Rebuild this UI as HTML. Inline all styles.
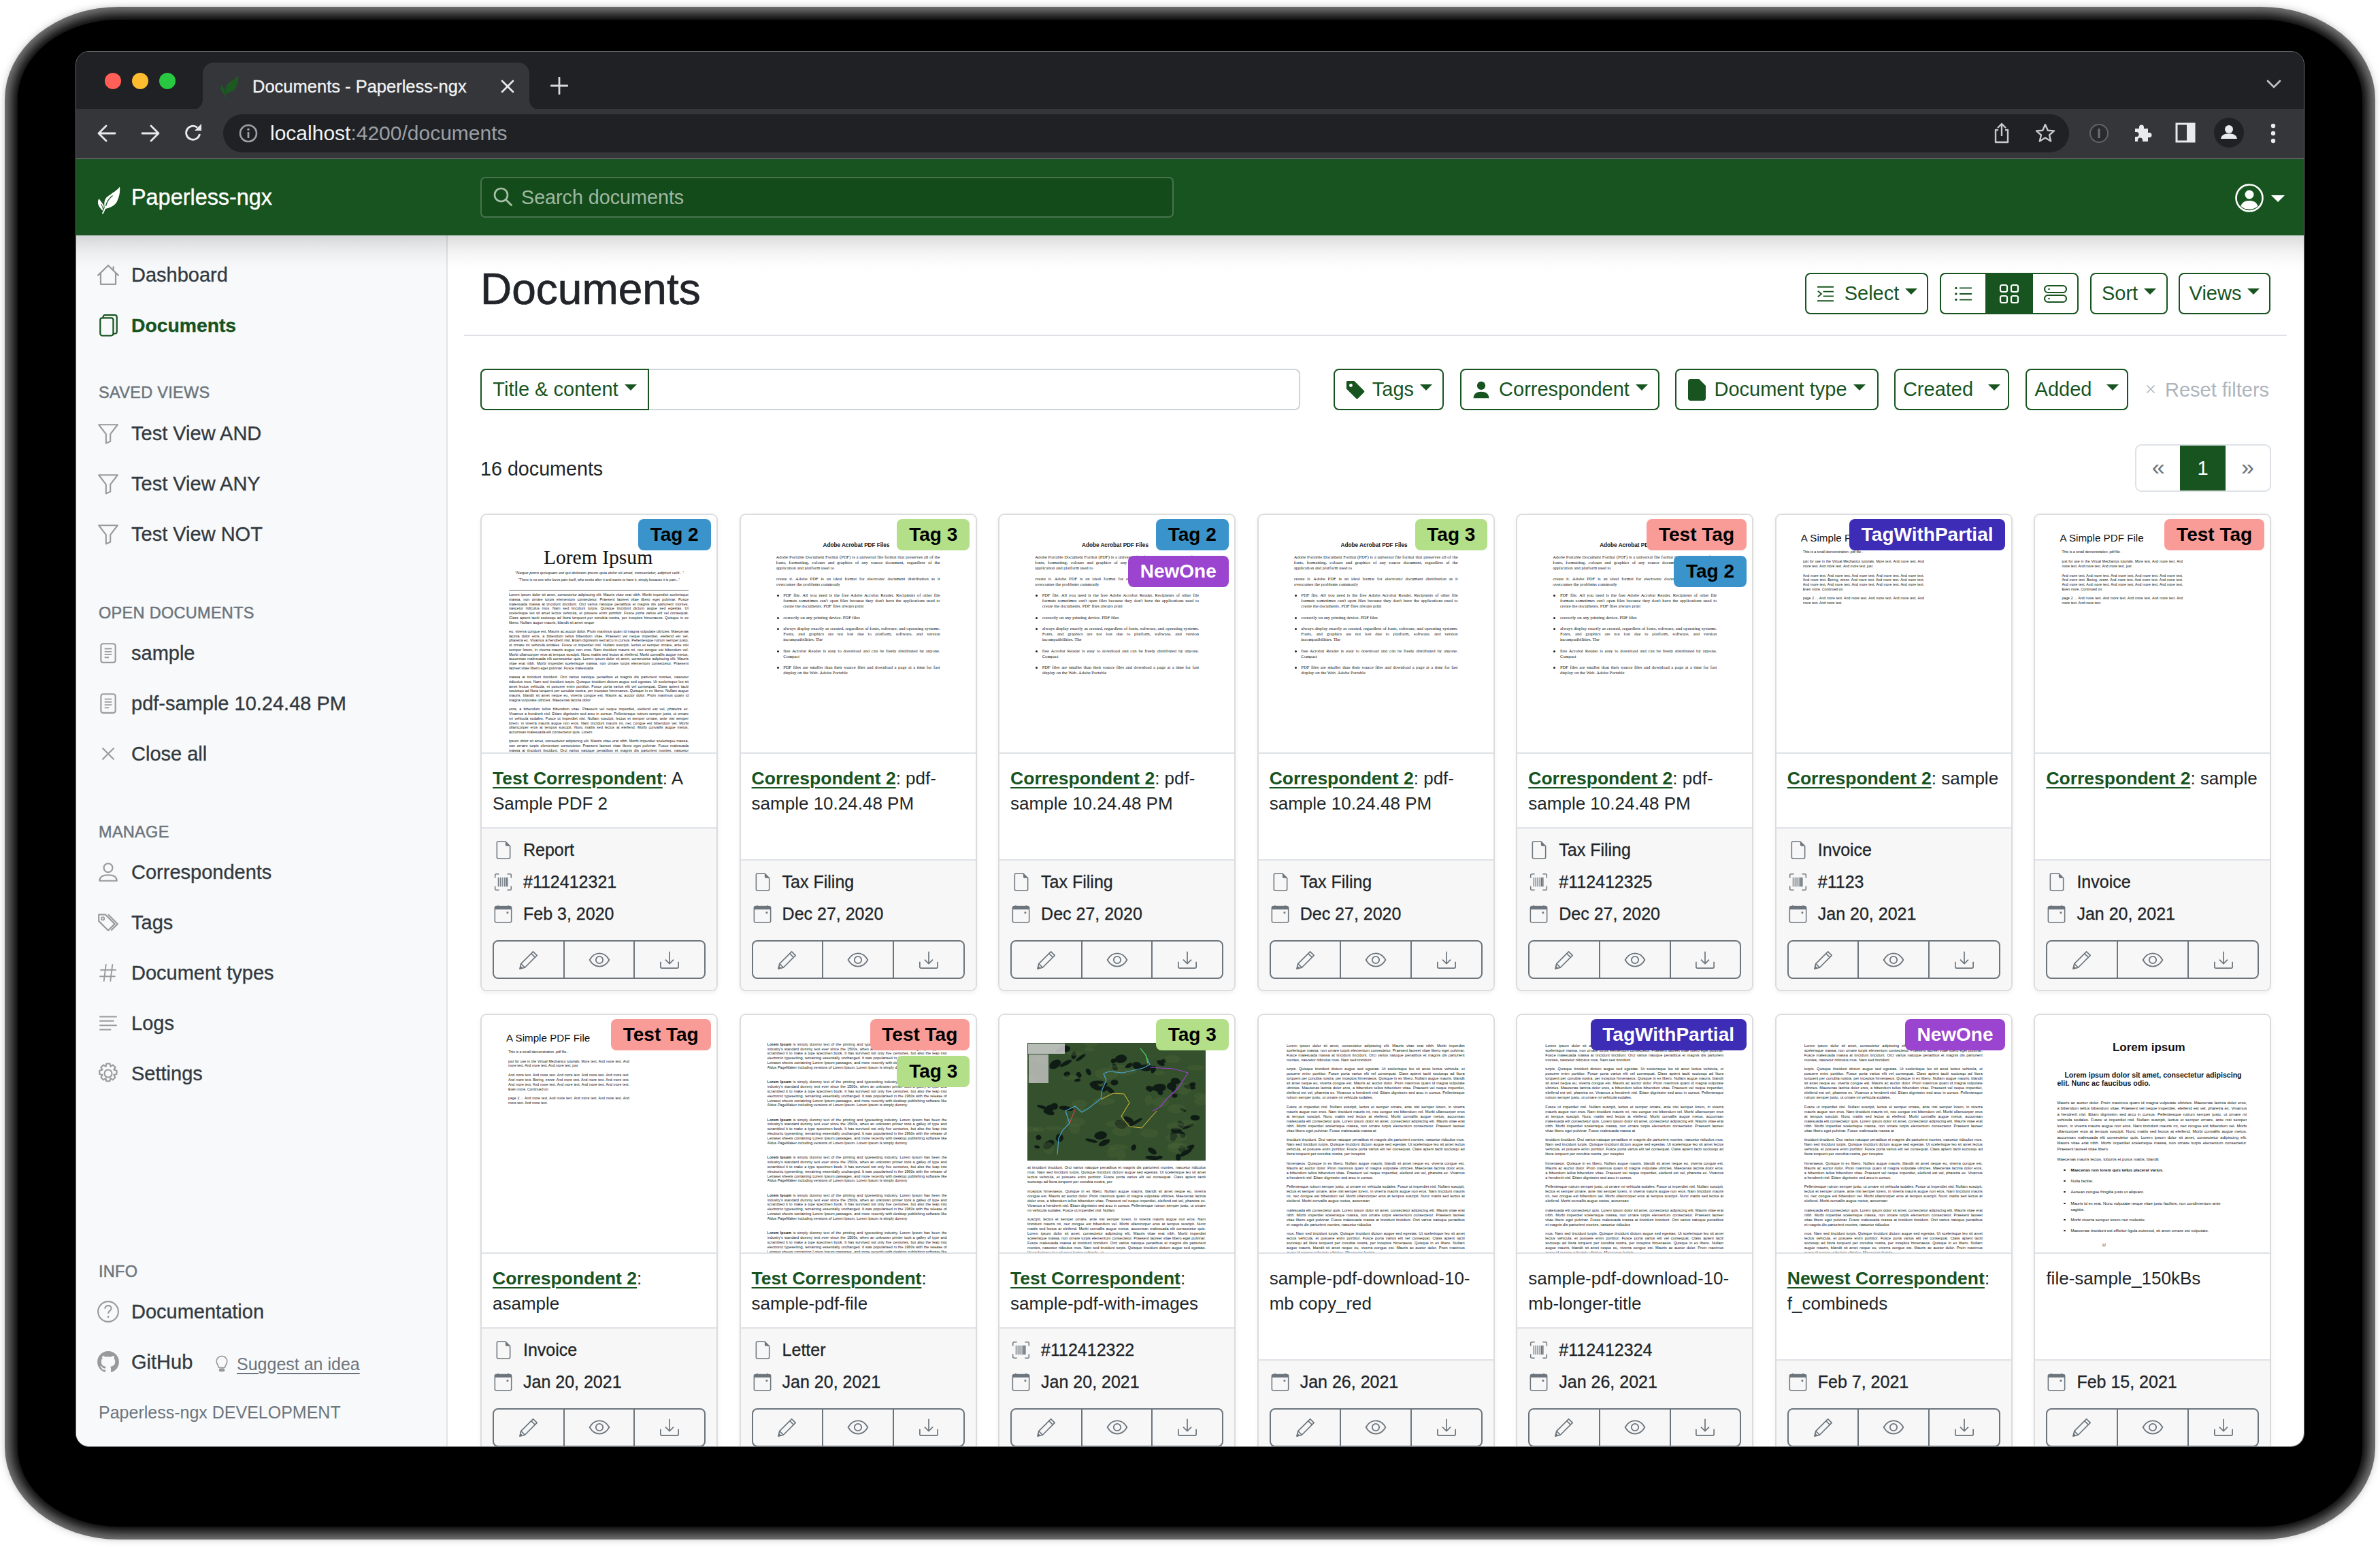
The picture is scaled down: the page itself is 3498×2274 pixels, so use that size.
<!DOCTYPE html><html><head><meta charset="utf-8"><title>Documents - Paperless-ngx</title><style>
*{box-sizing:border-box;margin:0;padding:0}
html,body{width:3498px;height:2274px;overflow:hidden;background:#fff;font-family:"Liberation Sans",sans-serif}
.abs{position:absolute}
#shadow-o{position:absolute;left:7px;top:10px;width:3484px;height:2253px;border-radius:168px/136px;background:#7c7c7c}
#shadow-i{position:absolute;left:26px;top:29px;width:3446px;height:2215px;border-radius:149px/117px;background:#000;box-shadow:0 0 18px 9px #000}
#win{position:absolute;left:111px;top:75px;width:3276px;height:2052px;border-radius:20px;overflow:hidden;background:#202124;border:1.5px solid #6f7073}
#tabstrip{position:absolute;left:0;top:0;width:100%;height:84px;background:#202124}
.tl{position:absolute;width:24px;height:24px;border-radius:50%;top:31px}
#tab{position:absolute;left:186px;top:16px;width:480px;height:70px;background:#35363a;border-radius:16px 16px 0 0}
#tab:before,#tab:after{content:"";position:absolute;bottom:0;width:16px;height:16px;background:transparent}
#tab:before{left:-16px;border-bottom-right-radius:16px;box-shadow:6px 6px 0 6px #35363a}
#tab:after{right:-16px;border-bottom-left-radius:16px;box-shadow:-6px 6px 0 6px #35363a}
#toolbar{position:absolute;left:0;top:84px;width:100%;height:72px;background:#35363a}
#tbline{position:absolute;left:0;top:156px;width:100%;height:2px;background:#5c5d60}
#omni{position:absolute;left:216px;top:92px;width:2713px;height:56px;border-radius:28px;background:#202124}
#page{position:absolute;left:0;top:158px;width:3274px;height:1892px;background:#fff;overflow:hidden}
#nav{position:absolute;left:0;top:0;width:100%;height:112px;background:#17541f;z-index:3}
#navshadow{position:absolute;left:0;top:112px;width:100%;height:54px;background:linear-gradient(rgba(0,0,0,.14),rgba(0,0,0,.1) 18%,rgba(0,0,0,.06) 38%,rgba(0,0,0,.03) 58%,rgba(0,0,0,.012) 78%,rgba(0,0,0,0));z-index:2}
#side{position:absolute;left:0;top:112px;width:546px;height:1780px;background:#f8f9fa;border-right:2px solid #e3e4e6}
.sl{position:absolute;left:81px;font-size:29px;color:#333a40;white-space:nowrap;line-height:36px;-webkit-text-stroke:0.35px currentColor}
.sh{position:absolute;left:33px;font-size:23.5px;color:#6c757d;white-space:nowrap;letter-spacing:.3px;line-height:30px;-webkit-text-stroke:0.5px currentColor}
.si{position:absolute;left:30px;width:34px;height:34px}
.btn{position:absolute;border:2px solid #17541f;border-radius:8px;color:#17541f;font-size:29px;white-space:nowrap;display:flex;align-items:center;justify-content:center}
.caret{display:inline-block;width:0;height:0;border-left:9px solid transparent;border-right:9px solid transparent;border-top:9px solid currentColor;margin-left:9px;position:relative;top:-3px}
.card{position:absolute;width:349px;border:2px solid #dcdcdc;border-radius:9px;background:#fff;box-shadow:0 3px 6px rgba(0,0,0,.06);overflow:hidden}
.thumb{position:absolute;left:0;top:0;width:100%;height:351px;overflow:hidden;background:#fff;border-bottom:2px solid #dee2e6}
.ctitle{position:absolute;left:16px;top:353px;width:313px;font-size:26px;line-height:37px;color:#212529;padding-top:16px}
.ctitle b{color:#17541f;text-decoration:underline;text-decoration-thickness:2px;text-underline-offset:4px;font-size:26.5px}
.foot{position:absolute;left:0;bottom:0;width:100%;background:#f7f7f7;border-top:2px solid #dee2e6}
.frow{position:relative;height:47px;font-size:25px;color:#212529;white-space:nowrap;-webkit-text-stroke:0.3px #212529}
.frow span{position:absolute;left:61px;top:0px;line-height:30px}
.frow svg{position:absolute;left:18px;top:2px}
.bg3{position:absolute;left:16px;width:313px;height:57px;border:2px solid #6c757d;border-radius:8px;display:flex}
.bg3 div{flex:1;display:flex;align-items:center;justify-content:center}
.bg3 div+div{border-left:2px solid #6c757d}
.tag{position:absolute;height:46px;border-radius:8px;font-weight:bold;font-size:28px;line-height:46px;padding:0 17.8px;white-space:nowrap}
.doc{position:absolute;color:#222;white-space:normal;word-spacing:0;overflow:hidden}
.tin{position:absolute;left:-2px;top:-3px;width:100%;height:100%}
.tin .doc{color:#111 !important}
</style></head><body>
<div id="shadow-o"></div><div id="shadow-i"></div>
<div id="win">
<div id="tabstrip">
<div class="tl" style="left:42px;background:#ff5f57"></div>
<div class="tl" style="left:82px;background:#febc2e"></div>
<div class="tl" style="left:122px;background:#28c840"></div>
<div id="tab">
<div class="abs" style="left:20px;top:13px"><svg width="40" height="40" viewBox="0 0 50 50" style=""><path d="M18 40C16 30 18 24 24 20.5C30 16 36 13 40 7.5C41 15 39 24 35 31C31 36 26 38.5 18 40Z" fill="#1c5a22"/><path d="M14.5 42.5C10 38 7.5 33 8 30C8 28 8.5 26.5 9.5 25C12 29 15 32 16.5 35C17 38 15.5 40.5 14.5 42.5Z" fill="#1c5a22"/><path d="M18.5 39L15 46.5" stroke="#1c5a22" stroke-width="2" stroke-linecap="round"/></svg></div>
<div class="abs" style="left:73px;top:20px;font-size:25.5px;color:#f1f3f4;white-space:nowrap;line-height:30px;-webkit-text-stroke:0.3px #f1f3f4">Documents - Paperless-ngx</div>
<div class="abs" style="left:438px;top:24.5px"><svg width="20" height="20" viewBox="0 0 20 20" style=""><path d="M2 2L18 18M18 2L2 18" stroke="#e8eaed" stroke-width="2.6" stroke-linecap="round"/></svg></div>
</div>
<div class="abs" style="left:697px;top:37px"><svg width="26" height="26" viewBox="0 0 26 26" style=""><path d="M13 1V25M1 13H25" stroke="#d7d9dc" stroke-width="2.8" stroke-linecap="round"/></svg></div>
<div class="abs" style="left:3219px;top:41px"><svg width="22" height="14" viewBox="0 0 22 14" style=""><path d="M2 2L11 11L20 2" stroke="#c4c7c5" stroke-width="2.6" fill="none" stroke-linecap="round"/></svg></div>
</div>
<div id="toolbar">
<div class="abs" style="left:29px;top:98px"></div>
<div class="abs" style="left:30px;top:23px"><svg width="30" height="26" viewBox="0 0 30 26" style=""><path d="M14 2L3 13L14 24M3 13H27" stroke="#e8eaed" stroke-width="2.8" fill="none" stroke-linecap="round" stroke-linejoin="round"/></svg></div>
<div class="abs" style="left:94px;top:23px"><svg width="30" height="26" viewBox="0 0 30 26" style="transform:scaleX(-1)"><path d="M14 2L3 13L14 24M3 13H27" stroke="#e8eaed" stroke-width="2.8" fill="none" stroke-linecap="round" stroke-linejoin="round"/></svg></div>
<div class="abs" style="left:157px;top:20px"><svg width="30" height="30" viewBox="0 0 30 30" style=""><path d="M24.5 17A10 10 0 1 1 21 7.5" stroke="#e8eaed" stroke-width="2.8" fill="none"/><path d="M27 2V12H17Z" fill="#e8eaed"/></svg></div>
</div>
<div id="tbline"></div>
<div id="omni">
<div class="abs" style="left:23px;top:14px"><svg width="28" height="28" viewBox="0 0 28 28" style=""><circle cx="14" cy="14" r="12" stroke="#9aa0a6" stroke-width="2.6" fill="none"/><rect x="12.6" y="12" width="2.8" height="9" fill="#9aa0a6"/><circle cx="14" cy="8.2" r="1.8" fill="#9aa0a6"/></svg></div>
<div class="abs" style="left:69px;top:10px;font-size:30px;line-height:36px;color:#f1f3f4;white-space:nowrap">localhost<span style="color:#9aa0a6">:4200/documents</span></div>
<div class="abs" style="left:2600px;top:12px"><svg width="28" height="32" viewBox="0 0 28 32" style=""><path d="M9 11H5V29H23V11H19M14 2V20M8 8L14 2L20 8" stroke="#c7c9cc" stroke-width="2.4" fill="none" stroke-linejoin="round"/></svg></div>
<div class="abs" style="left:2662px;top:12px"><svg width="32" height="32" viewBox="0 0 32 32" style=""><path d="M16 3L19.8 11.7L29 12.4L22 18.5L24.2 27.6L16 22.6L7.8 27.6L10 18.5L3 12.4L12.2 11.7Z" stroke="#c7c9cc" stroke-width="2.4" fill="none" stroke-linejoin="round"/></svg></div>
</div>
<div class="abs" style="left:2958px;top:105px"><svg width="30" height="30" viewBox="0 0 30 30" style=""><circle cx="15" cy="15" r="13" stroke="#5f6368" stroke-width="2" fill="#2a2b2e"/><rect x="13.5" y="8" width="3" height="14" fill="#6e7276"/></svg></div>
<div class="abs" style="left:3021px;top:104px"><svg width="32" height="32" viewBox="0 0 32 32" style=""><path d="M5 9H11V7A3.5 3.5 0 0 1 18 7V9H24V15H26A3.5 3.5 0 0 1 26 22H24V28H16V26A3.5 3.5 0 0 0 9 26V28H5V21H7A3.5 3.5 0 0 0 7 14H5Z" fill="#e8eaed"/></svg></div>
<div class="abs" style="left:3085px;top:104px"><svg width="30" height="30" viewBox="0 0 30 30" style=""><rect x="2" y="2" width="26" height="26" fill="none" stroke="#e8eaed" stroke-width="3"/><rect x="17" y="2" width="11" height="26" fill="#e8eaed"/></svg></div>
<div class="abs" style="left:3142px;top:97px;width:44px;height:44px;border-radius:50%;background:#202124"><svg width="44" height="44" viewBox="0 0 44 44" style=""><circle cx="22" cy="17" r="6" fill="#e8eaed"/><path d="M10 31C11 25 16 23.5 22 23.5S33 25 34 31Z" fill="#e8eaed"/></svg></div>
<div class="abs" style="left:3225px;top:104px"><svg width="8" height="32" viewBox="0 0 8 32" style=""><circle cx="4" cy="5" r="3.2" fill="#e8eaed"/><circle cx="4" cy="16" r="3.2" fill="#e8eaed"/><circle cx="4" cy="27" r="3.2" fill="#e8eaed"/></svg></div>
<div id="page">
<div id="nav">
<div class="abs" style="left:24px;top:33px"><svg width="50" height="50" viewBox="0 0 50 50" style=""><path d="M18 40C16 30 18 24 24 20.5C30 16 36 13 40 7.5C41 15 39 24 35 31C31 36 26 38.5 18 40Z" fill="#fff"/><path d="M29.5 20.5C24 25 20.5 30 19.5 36" stroke="#17541f" stroke-width="1.3" fill="none"/><path d="M14.5 42.5C10 38 7.5 33 8 30C8 28 8.5 26.5 9.5 25C12 29 15 32 16.5 35C17 38 15.5 40.5 14.5 42.5Z" fill="#fff"/><path d="M13 33L15.5 40" stroke="#17541f" stroke-width="0.9" fill="none"/><path d="M18.5 39L15 46.5" stroke="#fff" stroke-width="1.8" fill="none" stroke-linecap="round"/></svg></div>
<div class="abs" style="left:81px;top:36px;font-size:32.4px;line-height:40px;color:#fff;white-space:nowrap;-webkit-text-stroke:0.4px #fff">Paperless-ngx</div>
<div class="abs" style="left:594px;top:26px;width:1019px;height:60px;border:2px solid rgba(255,255,255,.22);border-radius:7px;background:rgba(0,0,0,.1)"></div>
<div class="abs" style="left:613px;top:41px"><svg width="28" height="29" viewBox="0 0 28 29" style=""><circle cx="11.5" cy="11.5" r="9.5" stroke="#a9c0ab" stroke-width="2.6" fill="none"/><path d="M18.5 18.5L26.5 26.5" stroke="#a9c0ab" stroke-width="2.8" stroke-linecap="round"/></svg></div>
<div class="abs" style="left:654px;top:38px;font-size:28.7px;line-height:36px;color:#9fb8a2;white-space:nowrap">Search documents</div>
<div class="abs" style="left:3173px;top:36px"><svg width="42" height="42" viewBox="0 0 42 42" style=""><circle cx="21" cy="21" r="19.5" stroke="#fff" stroke-width="2.6" fill="none"/><circle cx="21" cy="16" r="6.5" fill="#fff"/><path d="M8.5 33C10.5 27 15 25 21 25S31.5 27 33.5 33A19 19 0 0 1 8.5 33Z" fill="#fff"/></svg></div>
<div class="abs" style="left:3226px;top:53px;width:0;height:0;border-left:10px solid transparent;border-right:10px solid transparent;border-top:10px solid #fff"></div>
</div>
<div id="navshadow"></div>
<div id="side">
<div class="si" style="top:41.0px"><svg width="34" height="34" viewBox="0 0 16 16" style=""><path d="M8 1.5L1 8.3M8 1.5L15 8.3M2.8 6.8V14.5H13.2V6.8M11.6 2.5V5" stroke="#9a9a9a" stroke-width="1.05" fill="none" stroke-linejoin="round" stroke-linecap="round"/></svg></div>
<div class="sl" style="top:40.0px;">Dashboard</div>
<div class="si" style="top:115.0px"><svg width="34" height="34" viewBox="0 0 16 16" style=""><rect x="2.5" y="3" width="9" height="12.2" rx="1.4" stroke="#17541f" stroke-width="1.05" fill="none"/><path d="M4.5 3V2.4C4.5 1.6 5 1 5.8 1H12.6C13.4 1 14 1.6 14 2.4V12.6C14 13.3 13.5 13.8 12.8 13.8H11.5" stroke="#17541f" stroke-width="1.05" fill="none"/></svg></div>
<div class="sl" style="top:114.0px;color:#17541f;font-weight:bold;font-size:28.3px">Documents</div>
<div class="si" style="top:274.0px"><svg width="34" height="34" viewBox="0 0 16 16" style=""><path d="M1.5 2H14.5L9.5 8.5V13.5L6.5 14.8V8.5Z" stroke="#9a9a9a" stroke-width="1" fill="none" stroke-linejoin="round"/></svg></div>
<div class="sl" style="top:273.0px;">Test View AND</div>
<div class="si" style="top:348.0px"><svg width="34" height="34" viewBox="0 0 16 16" style=""><path d="M1.5 2H14.5L9.5 8.5V13.5L6.5 14.8V8.5Z" stroke="#9a9a9a" stroke-width="1" fill="none" stroke-linejoin="round"/></svg></div>
<div class="sl" style="top:347.0px;">Test View ANY</div>
<div class="si" style="top:422.0px"><svg width="34" height="34" viewBox="0 0 16 16" style=""><path d="M1.5 2H14.5L9.5 8.5V13.5L6.5 14.8V8.5Z" stroke="#9a9a9a" stroke-width="1" fill="none" stroke-linejoin="round"/></svg></div>
<div class="sl" style="top:421.0px;">Test View NOT</div>
<div class="si" style="top:597.0px"><svg width="34" height="34" viewBox="0 0 16 16" style=""><rect x="3" y="1.5" width="10" height="13" rx="1.5" stroke="#9a9a9a" stroke-width="1" fill="none"/><path d="M5.5 5H10.5M5.5 7H10.5M5.5 9H10.5M5.5 11H8.5" stroke="#9a9a9a" stroke-width="0.9"/></svg></div>
<div class="sl" style="top:596.0px;">sample</div>
<div class="si" style="top:671.0px"><svg width="34" height="34" viewBox="0 0 16 16" style=""><rect x="3" y="1.5" width="10" height="13" rx="1.5" stroke="#9a9a9a" stroke-width="1" fill="none"/><path d="M5.5 5H10.5M5.5 7H10.5M5.5 9H10.5M5.5 11H8.5" stroke="#9a9a9a" stroke-width="0.9"/></svg></div>
<div class="sl" style="top:670.0px;">pdf-sample 10.24.48 PM</div>
<div class="si" style="top:745.0px"><svg width="34" height="34" viewBox="0 0 16 16" style=""><path d="M4 4L12 12M12 4L4 12" stroke="#9a9a9a" stroke-width="1"/></svg></div>
<div class="sl" style="top:744.0px;">Close all</div>
<div class="si" style="top:919.0px"><svg width="34" height="34" viewBox="0 0 16 16" style=""><circle cx="8" cy="5" r="3" stroke="#9a9a9a" stroke-width="1" fill="none"/><path d="M2 14C2 11 4.5 10 8 10S14 11 14 14Z" stroke="#9a9a9a" stroke-width="1" fill="none" stroke-linejoin="round"/></svg></div>
<div class="sl" style="top:918.0px;">Correspondents</div>
<div class="si" style="top:993.0px"><svg width="34" height="34" viewBox="0 0 16 16" style=""><path d="M1.5 2.5V7L8 13.5L12.5 9L6 2.5Z" stroke="#9a9a9a" stroke-width="1" fill="none" stroke-linejoin="round"/><circle cx="4.3" cy="5.3" r="1" stroke="#9a9a9a" stroke-width="0.9" fill="none"/><path d="M8 2.5L14.5 9L10 13.5" stroke="#9a9a9a" stroke-width="1" fill="none"/></svg></div>
<div class="sl" style="top:992.0px;">Tags</div>
<div class="si" style="top:1067.0px"><svg width="34" height="34" viewBox="0 0 16 16" style=""><path d="M6.5 2L5 14M11 2L9.5 14M2.5 6H13.5M2 10.5H13" stroke="#9a9a9a" stroke-width="0.9"/></svg></div>
<div class="sl" style="top:1066.0px;">Document types</div>
<div class="si" style="top:1141.0px"><svg width="34" height="34" viewBox="0 0 16 16" style=""><path d="M2 3.5H14M2 6.5H12M2 9.5H14M2 12.5H10" stroke="#9a9a9a" stroke-width="0.9"/></svg></div>
<div class="sl" style="top:1140.0px;">Logs</div>
<div class="si" style="top:1215.0px"><svg width="34" height="34" viewBox="0 0 16 16" style=""><circle cx="8" cy="8" r="2.6" stroke="#9a9a9a" stroke-width="1" fill="none"/><path d="M6.8 1.2H9.2L9.6 3.1L11.3 2.1L13 3.8L11.9 5.4L13.9 6V8.4L11.9 9L12.9 10.7L11.2 12.4L9.6 11.3L9.1 13.3H6.7L6.3 11.3L4.7 12.4L3 10.7L4 9L2 8.4V6L4 5.4L3 3.8L4.7 2.1L6.4 3.1Z" stroke="#9a9a9a" stroke-width="1" fill="none" stroke-linejoin="round"/></svg></div>
<div class="sl" style="top:1214.0px;">Settings</div>
<div class="si" style="top:1565.0px"><svg width="34" height="34" viewBox="0 0 16 16" style=""><circle cx="8" cy="8" r="7" stroke="#9a9a9a" stroke-width="1" fill="none"/><path d="M5.8 6C5.8 4.6 6.8 3.8 8 3.8S10.2 4.6 10.2 5.8C10.2 7.3 8 7.4 8 9.3" stroke="#9a9a9a" stroke-width="1" fill="none"/><circle cx="8" cy="11.6" r=".7" fill="#9a9a9a"/></svg></div>
<div class="sl" style="top:1564.0px;">Documentation</div>
<div class="si" style="top:1639.0px"><svg width="34" height="34" viewBox="0 0 16 16" style=""><path d="M8 0.5C3.9 0.5 0.5 3.9 0.5 8C0.5 11.3 2.7 14.1 5.6 15.1C6 15.2 6.1 14.9 6.1 14.7V13.4C4 13.8 3.6 12.5 3.6 12.5C3.2 11.6 2.7 11.4 2.7 11.4C2 10.9 2.8 10.9 2.8 10.9C3.5 11 3.9 11.7 3.9 11.7C4.6 12.8 5.6 12.5 6.1 12.3C6.2 11.8 6.4 11.5 6.6 11.3C4.9 11.1 3.2 10.5 3.2 7.7C3.2 6.9 3.5 6.2 4 5.7C3.9 5.5 3.7 4.8 4.1 3.8C4.1 3.8 4.7 3.6 6.1 4.5C6.7 4.4 7.4 4.3 8 4.3S9.3 4.4 9.9 4.5C11.3 3.6 11.9 3.8 11.9 3.8C12.3 4.8 12.1 5.5 12 5.7C12.5 6.2 12.8 6.9 12.8 7.7C12.8 10.5 11.1 11.1 9.4 11.3C9.7 11.5 9.9 12 9.9 12.6V14.7C9.9 14.9 10 15.2 10.5 15.1C13.3 14.1 15.5 11.3 15.5 8C15.5 3.9 12.1 0.5 8 0.5Z" fill="#9a9a9a"/></svg></div>
<div class="sl" style="top:1638.0px;">GitHub</div>
<div class="sh" style="top:216.0px">SAVED VIEWS</div>
<div class="sh" style="top:540.0px">OPEN DOCUMENTS</div>
<div class="sh" style="top:862.0px">MANAGE</div>
<div class="sh" style="top:1508.0px">INFO</div>
<div class="abs" style="left:202px;top:1645px"><svg width="24" height="28" viewBox="0 0 16 18" style=""><path d="M5 12.5C5 10.5 2.8 9.5 2.8 6.4A5.2 5.2 0 0 1 13.2 6.4C13.2 9.5 11 10.5 11 12.5Z" stroke="#9a9a9a" stroke-width="1.1" fill="none"/><rect x="5.2" y="13.2" width="5.6" height="3.3" rx="1.2" fill="#9a9a9a"/></svg></div>
<div class="abs" style="left:236px;top:1643px;font-size:25px;line-height:32px;color:#6c757d;text-decoration:underline;text-underline-offset:4px;white-space:nowrap">Suggest an idea</div>
<div class="abs" style="left:33px;top:1715px;font-size:25px;line-height:30px;color:#6c757d;white-space:nowrap">Paperless-ngx DEVELOPMENT</div>
</div>
<div class="abs" style="left:594px;top:155px;font-size:64px;line-height:72px;color:#212529;white-space:nowrap;-webkit-text-stroke:0.7px #212529">Documents</div>
<div class="abs" style="left:570px;top:258px;width:2679px;height:2px;background:#dee2e6"></div>
<div class="btn" style="left:2541px;top:167px;width:181px;height:61px;"><svg width="28" height="24" viewBox="0 0 16 14" style=""><path d="M1 1H15M6 5H15M6 9H15M1 13H15M1.5 4.5L4.5 7L1.5 9.5" stroke="#17541f" stroke-width="1.1" fill="none"/></svg><span style="margin-left:14px">Select</span><span class="caret"></span></div>
<div class="btn" style="left:2739px;top:167px;width:204px;height:61px;justify-content:flex-start;overflow:hidden"><div style="width:65px;height:57px;display:flex;align-items:center;justify-content:center"><svg width="32" height="24" viewBox="0 0 16 14" style=""><circle cx="1.5" cy="2" r="1" fill="#17541f"/><circle cx="1.5" cy="7" r="1" fill="#17541f"/><circle cx="1.5" cy="12" r="1" fill="#17541f"/><path d="M4.5 2H15M4.5 7H15M4.5 12H15" stroke="#17541f" stroke-width="1.1"/></svg></div><div style="width:70px;height:57px;background:#17541f;display:flex;align-items:center;justify-content:center"><svg width="32" height="32" viewBox="0 0 16 16" style=""><rect x="1.5" y="1.5" width="5" height="5" rx="1.2" stroke="#fff" stroke-width="1.1" fill="none"/><rect x="9.5" y="1.5" width="5" height="5" rx="1.2" stroke="#fff" stroke-width="1.1" fill="none"/><rect x="1.5" y="9.5" width="5" height="5" rx="1.2" stroke="#fff" stroke-width="1.1" fill="none"/><rect x="9.5" y="9.5" width="5" height="5" rx="1.2" stroke="#fff" stroke-width="1.1" fill="none"/></svg></div><div style="width:65px;height:57px;display:flex;align-items:center;justify-content:center"><svg width="36" height="28" viewBox="0 0 18 14" style=""><rect x="1" y="1" width="16" height="5" rx="2.5" stroke="#17541f" stroke-width="1.1" fill="none"/><rect x="1" y="8" width="16" height="5" rx="2.5" stroke="#17541f" stroke-width="1.1" fill="none"/><path d="M3.5 3.5H5M3.5 10.5H5" stroke="#17541f" stroke-width="0.8"/></svg></div></div>
<div class="btn" style="left:2960px;top:167px;width:114px;height:61px;"><span>Sort</span><span class="caret"></span></div>
<div class="btn" style="left:3090px;top:167px;width:135px;height:61px;"><span>Views</span><span class="caret"></span></div>
<div class="abs" style="left:594px;top:308px;width:1205px;height:61px;border:2px solid #ced4da;border-radius:8px"></div>
<div class="btn" style="left:594px;top:308px;width:248px;height:61px;border-radius:8px 0 0 8px"><span>Title &amp; content</span><span class="caret"></span></div>
<div class="btn" style="left:1848px;top:308px;width:162px;height:61px;"><svg width="30" height="30" viewBox="0 0 16 16" style=""><path d="M1 1.8V7.2L8.6 14.8C9 15.2 9.6 15.2 10 14.8L14.8 10C15.2 9.6 15.2 9 14.8 8.6L7.2 1H1.8C1.4 1 1 1.4 1 1.8ZM4.5 3.2A1.3 1.3 0 1 0 4.5 5.8A1.3 1.3 0 1 0 4.5 3.2Z" fill="#17541f" fill-rule="evenodd"/></svg><span style="margin-left:10px">Tags</span><span class="caret"></span></div>
<div class="btn" style="left:2034px;top:308px;width:293px;height:61px;"><svg width="28" height="28" viewBox="0 0 16 16" style=""><circle cx="8" cy="4.5" r="3.5" fill="#17541f"/><path d="M1.5 15C1.5 11 4.5 9.5 8 9.5S14.5 11 14.5 15Z" fill="#17541f"/></svg><span style="margin-left:12px">Correspondent</span><span class="caret"></span></div>
<div class="btn" style="left:2350px;top:308px;width:299px;height:61px;"><svg width="26" height="32" viewBox="0 0 13 16" style=""><path d="M1.8 0H8L13 5V14.2C13 15.2 12.2 16 11.2 16H1.8C0.8 16 0 15.2 0 14.2V1.8C0 0.8 0.8 0 1.8 0Z" fill="#17541f"/><path d="M8 0V3.5C8 4.3 8.7 5 9.5 5H13" fill="#fff" opacity=".0"/></svg><span style="margin-left:12px">Document type</span><span class="caret"></span></div>
<div class="btn" style="left:2672px;top:308px;width:169px;height:61px;"><span>Created</span><span class="caret" style="margin-left:22px"></span></div>
<div class="btn" style="left:2865px;top:308px;width:151px;height:61px;"><span>Added</span><span class="caret" style="margin-left:22px"></span></div>
<div class="abs" style="left:3038px;top:327px"><svg width="22" height="22" viewBox="0 0 16 16" style=""><path d="M4 4L12 12M12 4L4 12" stroke="#adb5bd" stroke-width="1.2"/></svg></div>
<div class="abs" style="left:3070px;top:321px;font-size:29px;line-height:36px;color:#adb5bd;white-space:nowrap">Reset filters</div>
<div class="abs" style="left:594px;top:437px;font-size:28.7px;line-height:36px;color:#212529;white-space:nowrap">16 documents</div>
<div class="abs" style="left:3026px;top:419px;width:200px;height:70px;border:2px solid #dee2e6;border-radius:9px;overflow:hidden;display:flex"><div style="width:65px;display:flex;align-items:center;justify-content:center;color:#6c757d;font-size:34px;padding-bottom:4px">&laquo;</div><div style="width:67px;margin:-2px 0;background:#17541f;display:flex;align-items:center;justify-content:center;color:#fff;font-size:29px">1</div><div style="width:66px;display:flex;align-items:center;justify-content:center;color:#6c757d;font-size:34px;padding-bottom:4px">&raquo;</div></div>
<div class="card" style="left:594.0px;top:521.0px;height:702px">
<div class="thumb"><div class="tin"><div class="doc" style="left:92.9px;top:48.2px;font: normal 29.6px/35.5px 'Liberation Serif';color:#111;white-space:nowrap">Lorem Ipsum</div>
<div class="doc" style="left:51px;top:84px;font:italic 5.95px/8px 'Liberation Sans';color:#333;white-space:nowrap">"Neque porro quisquam est qui dolorem ipsum quia dolor sit amet, consectetur, adipisci velit..."</div>
<div class="doc" style="left:56px;top:94px;font:5.1px/8px 'Liberation Sans';color:#444;white-space:nowrap">"There is no one who loves pain itself, who seeks after it and wants to have it, simply because it is pain..."</div>
<div class="doc" style="left:42px;top:112.5px;width:264px;height:1px;background:#666"></div>
<div class="doc" style="left:42.0px;top:117.0px;width:264.0px;height:7.8px;font:normal normal 5.5px/6.76px 'Liberation Sans';color:#333;white-space:nowrap;text-align:justify;text-align-last:justify;">Lorem ipsum dolor sit amet, consectetur adipiscing elit. Mauris vitae erat nibh. Morbi imperdiet scelerisque</div>
<div class="doc" style="left:42.0px;top:123.8px;width:264.0px;height:7.8px;font:normal normal 5.5px/6.76px 'Liberation Sans';color:#333;white-space:nowrap;text-align:justify;text-align-last:justify;">massa, non ornare turpis elementum consectetur. Praesent laoreet vitae libero eget pulvinar. Fusce</div>
<div class="doc" style="left:42.0px;top:130.5px;width:264.0px;height:7.8px;font:normal normal 5.5px/6.76px 'Liberation Sans';color:#333;white-space:nowrap;text-align:justify;text-align-last:justify;">malesuada massa at tincidunt tincidunt. Orci varius natoque penatibus et magnis dis parturient montes,</div>
<div class="doc" style="left:42.0px;top:137.3px;width:264.0px;height:7.8px;font:normal normal 5.5px/6.76px 'Liberation Sans';color:#333;white-space:nowrap;text-align:justify;text-align-last:justify;">nascetur ridiculus mus. Nam sed tincidunt turpis. Quisque tincidunt dictum augue sed egestas. Ut</div>
<div class="doc" style="left:42.0px;top:144.0px;width:264.0px;height:7.8px;font:normal normal 5.5px/6.76px 'Liberation Sans';color:#333;white-space:nowrap;text-align:justify;text-align-last:justify;">scelerisque leo sit amet lectus vehicula, et posuere enim porttitor. Fusce porta varius elit vel consequat.</div>
<div class="doc" style="left:42.0px;top:150.8px;width:264.0px;height:7.8px;font:normal normal 5.5px/6.76px 'Liberation Sans';color:#333;white-space:nowrap;text-align:justify;text-align-last:justify;">Class aptent taciti sociosqu ad litora torquent per conubia nostra, per inceptos himenaeos. Quisque in ex</div>
<div class="doc" style="left:42.0px;top:157.6px;width:165.2px;height:7.8px;font:normal normal 5.5px/6.76px 'Liberation Sans';color:#333;white-space:nowrap;">libero. Nullam augue mauris, blandit sit amet neque</div>
<div class="doc" style="left:42.0px;top:170.8px;width:264.0px;height:7.8px;font:normal normal 5.5px/6.76px 'Liberation Sans';color:#333;white-space:nowrap;text-align:justify;text-align-last:justify;">eu, viverra congue est. Mauris ac auctor dolor. Proin maximus quam id magna vulputate ultricies. Maecenas</div>
<div class="doc" style="left:42.0px;top:177.6px;width:264.0px;height:7.8px;font:normal normal 5.5px/6.76px 'Liberation Sans';color:#333;white-space:nowrap;text-align:justify;text-align-last:justify;">lacinia dolor eros, a bibendum tellus bibendum vitae. Praesent vel neque imperdiet, eleifend est vel,</div>
<div class="doc" style="left:42.0px;top:184.3px;width:264.0px;height:7.8px;font:normal normal 5.5px/6.76px 'Liberation Sans';color:#333;white-space:nowrap;text-align:justify;text-align-last:justify;">pharetra ex. Vivamus a hendrerit nisl. Etiam dignissim sed arcu in cursus. Pellentesque rutrum semper justo,</div>
<div class="doc" style="left:42.0px;top:191.1px;width:264.0px;height:7.8px;font:normal normal 5.5px/6.76px 'Liberation Sans';color:#333;white-space:nowrap;text-align:justify;text-align-last:justify;">ut ornare mi vehicula sodales. Fusce ut imperdiet nisl. Nullam suscipit, lectus et semper ornare, ante nisi</div>
<div class="doc" style="left:42.0px;top:197.9px;width:264.0px;height:7.8px;font:normal normal 5.5px/6.76px 'Liberation Sans';color:#333;white-space:nowrap;text-align:justify;text-align-last:justify;">semper lorem, in viverra mauris augue non eros. Nam tincidunt mauris mi, nec congue est bibendum vel.</div>
<div class="doc" style="left:42.0px;top:204.6px;width:264.0px;height:7.8px;font:normal normal 5.5px/6.76px 'Liberation Sans';color:#333;white-space:nowrap;text-align:justify;text-align-last:justify;">Morbi ullamcorper eros at tempus suscipit. Nunc mattis sed lectus at eleifend. Morbi convallis augue metus,</div>
<div class="doc" style="left:42.0px;top:211.4px;width:264.0px;height:7.8px;font:normal normal 5.5px/6.76px 'Liberation Sans';color:#333;white-space:nowrap;text-align:justify;text-align-last:justify;">accumsan malesuada elit consectetur quis. Lorem ipsum dolor sit amet, consectetur adipiscing elit. Mauris</div>
<div class="doc" style="left:42.0px;top:218.1px;width:264.0px;height:7.8px;font:normal normal 5.5px/6.76px 'Liberation Sans';color:#333;white-space:nowrap;text-align:justify;text-align-last:justify;">vitae erat nibh. Morbi imperdiet scelerisque massa, non ornare turpis elementum consectetur. Praesent</div>
<div class="doc" style="left:42.0px;top:224.9px;width:165.2px;height:7.8px;font:normal normal 5.5px/6.76px 'Liberation Sans';color:#333;white-space:nowrap;">laoreet vitae libero eget pulvinar. Fusce malesuada</div>
<div class="doc" style="left:42.0px;top:238.2px;width:264.0px;height:7.8px;font:normal normal 5.5px/6.76px 'Liberation Sans';color:#333;white-space:nowrap;text-align:justify;text-align-last:justify;">massa at tincidunt tincidunt. Orci varius natoque penatibus et magnis dis parturient montes, nascetur</div>
<div class="doc" style="left:42.0px;top:244.9px;width:264.0px;height:7.8px;font:normal normal 5.5px/6.76px 'Liberation Sans';color:#333;white-space:nowrap;text-align:justify;text-align-last:justify;">ridiculus mus. Nam sed tincidunt turpis. Quisque tincidunt dictum augue sed egestas. Ut scelerisque leo sit</div>
<div class="doc" style="left:42.0px;top:251.7px;width:264.0px;height:7.8px;font:normal normal 5.5px/6.76px 'Liberation Sans';color:#333;white-space:nowrap;text-align:justify;text-align-last:justify;">amet lectus vehicula, et posuere enim porttitor. Fusce porta varius elit vel consequat. Class aptent taciti</div>
<div class="doc" style="left:42.0px;top:258.4px;width:264.0px;height:7.8px;font:normal normal 5.5px/6.76px 'Liberation Sans';color:#333;white-space:nowrap;text-align:justify;text-align-last:justify;">sociosqu ad litora torquent per conubia nostra, per inceptos himenaeos. Quisque in ex libero. Nullam augue</div>
<div class="doc" style="left:42.0px;top:265.2px;width:264.0px;height:7.8px;font:normal normal 5.5px/6.76px 'Liberation Sans';color:#333;white-space:nowrap;text-align:justify;text-align-last:justify;">mauris, blandit sit amet neque eu, viverra congue est. Mauris ac auctor dolor. Proin maximus quam id</div>
<div class="doc" style="left:42.0px;top:272.0px;width:165.2px;height:7.8px;font:normal normal 5.5px/6.76px 'Liberation Sans';color:#333;white-space:nowrap;">magna vulputate ultricies. Maecenas lacinia dolor</div>
<div class="doc" style="left:42.0px;top:285.2px;width:264.0px;height:7.8px;font:normal normal 5.5px/6.76px 'Liberation Sans';color:#333;white-space:nowrap;text-align:justify;text-align-last:justify;">eros, a bibendum tellus bibendum vitae. Praesent vel neque imperdiet, eleifend est vel, pharetra ex.</div>
<div class="doc" style="left:42.0px;top:292.0px;width:264.0px;height:7.8px;font:normal normal 5.5px/6.76px 'Liberation Sans';color:#333;white-space:nowrap;text-align:justify;text-align-last:justify;">Vivamus a hendrerit nisl. Etiam dignissim sed arcu in cursus. Pellentesque rutrum semper justo, ut ornare</div>
<div class="doc" style="left:42.0px;top:298.7px;width:264.0px;height:7.8px;font:normal normal 5.5px/6.76px 'Liberation Sans';color:#333;white-space:nowrap;text-align:justify;text-align-last:justify;">mi vehicula sodales. Fusce ut imperdiet nisl. Nullam suscipit, lectus et semper ornare, ante nisi semper</div>
<div class="doc" style="left:42.0px;top:305.5px;width:264.0px;height:7.8px;font:normal normal 5.5px/6.76px 'Liberation Sans';color:#333;white-space:nowrap;text-align:justify;text-align-last:justify;">lorem, in viverra mauris augue non eros. Nam tincidunt mauris mi, nec congue est bibendum vel. Morbi</div>
<div class="doc" style="left:42.0px;top:312.3px;width:264.0px;height:7.8px;font:normal normal 5.5px/6.76px 'Liberation Sans';color:#333;white-space:nowrap;text-align:justify;text-align-last:justify;">ullamcorper eros at tempus suscipit. Nunc mattis sed lectus at eleifend. Morbi convallis augue metus,</div>
<div class="doc" style="left:42.0px;top:319.0px;width:165.2px;height:7.8px;font:normal normal 5.5px/6.76px 'Liberation Sans';color:#333;white-space:nowrap;">accumsan malesuada elit consectetur quis. Lorem</div>
<div class="doc" style="left:42.0px;top:332.3px;width:264.0px;height:7.8px;font:normal normal 5.5px/6.76px 'Liberation Sans';color:#333;white-space:nowrap;text-align:justify;text-align-last:justify;">ipsum dolor sit amet, consectetur adipiscing elit. Mauris vitae erat nibh. Morbi imperdiet scelerisque massa,</div>
<div class="doc" style="left:42.0px;top:339.0px;width:264.0px;height:7.8px;font:normal normal 5.5px/6.76px 'Liberation Sans';color:#333;white-space:nowrap;text-align:justify;text-align-last:justify;">non ornare turpis elementum consectetur. Praesent laoreet vitae libero eget pulvinar. Fusce malesuada</div>
<div class="doc" style="left:42.0px;top:345.8px;width:264.0px;height:7.8px;font:normal normal 5.5px/6.76px 'Liberation Sans';color:#333;white-space:nowrap;text-align:justify;text-align-last:justify;">massa at tincidunt tincidunt. Orci varius natoque penatibus et magnis dis parturient montes, nascetur</div>
<div class="doc" style="left:42.0px;top:352.6px;width:264.0px;height:7.8px;font:normal normal 5.5px/6.76px 'Liberation Sans';color:#333;white-space:nowrap;text-align:justify;text-align-last:justify;">ridiculus mus. Nam sed tincidunt turpis. Quisque tincidunt dictum augue sed egestas. Ut scelerisque leo sit</div>
<div class="doc" style="left:42.0px;top:359.3px;width:165.2px;height:7.8px;font:normal normal 5.5px/6.76px 'Liberation Sans';color:#333;white-space:nowrap;">amet lectus vehicula, et posuere enim porttitor. Fusce</div></div></div>
<div class="tag" style="right:8.5px;top:6px;background:#3a93cb;color:#000">Tag 2</div>
<div class="ctitle"><b>Test Correspondent</b>: A Sample PDF 2</div>
<div class="foot" style="height:239px;padding-top:16px">
<div class="frow"><svg style="left:21px;top:2px" width="22" height="27" viewBox="0 0 11 14"><path d="M1.5 0.5H7L10.5 4V12.5C10.5 13 10 13.5 9.5 13.5H1.5C1 13.5 0.5 13 0.5 12.5V1.5C0.5 1 1 0.5 1.5 0.5Z" stroke="#6c757d" stroke-width="0.8" fill="none"/><path d="M7 0.5V3C7 3.6 7.4 4 8 4H10.5Z" fill="#6c757d"/></svg><span>Report</span></div>
<div class="frow"><svg width="27" height="27" viewBox="0 0 16 16"><path d="M1 4.5V2A1 1 0 0 1 2 1H4.5M11.5 1H14A1 1 0 0 1 15 2V4.5M15 11.5V14A1 1 0 0 1 14 15H11.5M4.5 15H2A1 1 0 0 1 1 14V11.5" stroke="#6c757d" stroke-width="0.9" fill="none"/><path d="M3.8 4V12M5.5 4V12M7.2 4V12M9 4V12M11.8 4V12" stroke="#6c757d" stroke-width="0.8"/><rect x="10" y="4" width="1.2" height="8" fill="#6c757d"/></svg><span>#112412321</span></div>
<div class="frow"><svg width="27" height="27" viewBox="0 0 16 16"><rect x="0.8" y="1.5" width="14.4" height="13.7" rx="1.2" stroke="#6c757d" stroke-width="0.9" fill="none"/><path d="M0.8 2.7A1.2 1.2 0 0 1 2 1.5H14A1.2 1.2 0 0 1 15.2 2.7V4H0.8Z" fill="#6c757d"/><rect x="11" y="6" width="1.6" height="1.6" fill="#6c757d"/><path d="M3.5 0.5V2M12.5 0.5V2" stroke="#6c757d" stroke-width="1"/></svg><span>Feb 3, 2020</span></div>
<div class="bg3" style="bottom:16px"><div><svg width="30" height="30" viewBox="0 0 16 16"><path d="M11.5 1.5L14.5 4.5L5 14L1 15L2 11Z" stroke="#6c757d" stroke-width="0.9" fill="none" stroke-linejoin="round"/><path d="M10 3L13 6M2 11L5 14" stroke="#6c757d" stroke-width="0.9"/><path d="M1 15L1.6 12.6L3.4 14.4Z" fill="#6c757d"/></svg></div><div><svg width="32" height="32" viewBox="0 0 16 16"><path d="M0.8 8C2.5 5 5 3.2 8 3.2S13.5 5 15.2 8C13.5 11 11 12.8 8 12.8S2.5 11 0.8 8Z" stroke="#6c757d" stroke-width="0.9" fill="none"/><circle cx="8" cy="8" r="2.6" stroke="#6c757d" stroke-width="0.9" fill="none"/></svg></div><div><svg width="30" height="30" viewBox="0 0 16 16"><path d="M1 9.5V13.5A1 1 0 0 0 2 14.5H14A1 1 0 0 0 15 13.5V9.5M8 1.5V11M4.8 7.8L8 11L11.2 7.8" stroke="#6c757d" stroke-width="0.9" fill="none"/></svg></div></div>
</div>
</div>
<div class="card" style="left:974.6px;top:521.0px;height:702px">
<div class="thumb"><div class="tin"><div class="doc" style="left:122.9px;top:43.1px;font: bold 8.2px/9.8px 'Liberation Sans';color:#111;white-space:nowrap">Adobe Acrobat PDF Files</div>
<div class="doc" style="left:54.0px;top:61.0px;width:241.0px;height:9.0px;font:normal normal 6.6px/8px 'Liberation Serif';color:#222;white-space:nowrap;text-align:justify;text-align-last:justify;">Adobe Portable Document Format (PDF) is a universal file format that preserves all of the</div>
<div class="doc" style="left:54.0px;top:69.0px;width:241.0px;height:9.0px;font:normal normal 6.6px/8px 'Liberation Serif';color:#222;white-space:nowrap;text-align:justify;text-align-last:justify;">fonts, formatting, colours and graphics of any source document, regardless of the</div>
<div class="doc" style="left:54.0px;top:77.0px;width:128.4px;height:9.0px;font:normal normal 6.6px/8px 'Liberation Serif';color:#222;white-space:nowrap;">application and platform used to</div>
<div class="doc" style="left:54.0px;top:93.0px;width:241.0px;height:9.0px;font:normal normal 6.6px/8px 'Liberation Serif';color:#222;white-space:nowrap;text-align:justify;text-align-last:justify;">create it. Adobe PDF is an ideal format for electronic document distribution as it</div>
<div class="doc" style="left:54.0px;top:101.0px;width:128.4px;height:9.0px;font:normal normal 6.6px/8px 'Liberation Serif';color:#222;white-space:nowrap;">overcomes the problems commonly</div>
<div class="doc" style="left:55px;top:119.5px;width:3px;height:3px;border-radius:50%;background:#222"></div>
<div class="doc" style="left:64.6px;top:117.0px;width:230.4px;height:9.0px;font:normal normal 6.6px/8px 'Liberation Serif';color:#222;white-space:nowrap;text-align:justify;text-align-last:justify;">PDF file. All you need is the free Adobe Acrobat Reader. Recipients of other file</div>
<div class="doc" style="left:64.6px;top:125.0px;width:230.4px;height:9.0px;font:normal normal 6.6px/8px 'Liberation Serif';color:#222;white-space:nowrap;text-align:justify;text-align-last:justify;">formats sometimes can't open files because they don't have the applications used to</div>
<div class="doc" style="left:64.6px;top:133.0px;width:158.2px;height:9.0px;font:normal normal 6.6px/8px 'Liberation Serif';color:#222;white-space:nowrap;">create the documents. PDF files always print</div>
<div class="doc" style="left:55px;top:152.5px;width:3px;height:3px;border-radius:50%;background:#222"></div>
<div class="doc" style="left:64.6px;top:150.0px;width:146.7px;height:9.0px;font:normal normal 6.6px/8px 'Liberation Serif';color:#222;white-space:nowrap;">correctly on any printing device. PDF files</div>
<div class="doc" style="left:55px;top:168.5px;width:3px;height:3px;border-radius:50%;background:#222"></div>
<div class="doc" style="left:64.6px;top:166.0px;width:230.4px;height:9.0px;font:normal normal 6.6px/8px 'Liberation Serif';color:#222;white-space:nowrap;text-align:justify;text-align-last:justify;">always display exactly as created, regardless of fonts, software, and operating systems.</div>
<div class="doc" style="left:64.6px;top:174.0px;width:230.4px;height:9.0px;font:normal normal 6.6px/8px 'Liberation Serif';color:#222;white-space:nowrap;text-align:justify;text-align-last:justify;">Fonts, and graphics are not lost due to platform, software, and version</div>
<div class="doc" style="left:64.6px;top:182.0px;width:89.1px;height:9.0px;font:normal normal 6.6px/8px 'Liberation Serif';color:#222;white-space:nowrap;">incompatibilities. The</div>
<div class="doc" style="left:55px;top:201.5px;width:3px;height:3px;border-radius:50%;background:#222"></div>
<div class="doc" style="left:64.6px;top:199.0px;width:230.4px;height:9.0px;font:normal normal 6.6px/8px 'Liberation Serif';color:#222;white-space:nowrap;text-align:justify;text-align-last:justify;">free Acrobat Reader is easy to download and can be freely distributed by anyone.</div>
<div class="doc" style="left:64.6px;top:207.0px;width:54.6px;height:9.0px;font:normal normal 6.6px/8px 'Liberation Serif';color:#222;white-space:nowrap;">Compact</div>
<div class="doc" style="left:55px;top:225.5px;width:3px;height:3px;border-radius:50%;background:#222"></div>
<div class="doc" style="left:64.6px;top:223.0px;width:230.4px;height:9.0px;font:normal normal 6.6px/8px 'Liberation Serif';color:#222;white-space:nowrap;text-align:justify;text-align-last:justify;">PDF files are smaller than their source files and download a page at a time for fast</div>
<div class="doc" style="left:64.6px;top:231.0px;width:135.2px;height:9.0px;font:normal normal 6.6px/8px 'Liberation Serif';color:#222;white-space:nowrap;">display on the Web. Adobe Portable</div></div></div>
<div class="tag" style="right:8.5px;top:6px;background:#b3df88;color:#000">Tag 3</div>
<div class="ctitle"><b>Correspondent 2</b>: pdf-sample 10.24.48 PM</div>
<div class="foot" style="height:192px;padding-top:16px">
<div class="frow"><svg style="left:21px;top:2px" width="22" height="27" viewBox="0 0 11 14"><path d="M1.5 0.5H7L10.5 4V12.5C10.5 13 10 13.5 9.5 13.5H1.5C1 13.5 0.5 13 0.5 12.5V1.5C0.5 1 1 0.5 1.5 0.5Z" stroke="#6c757d" stroke-width="0.8" fill="none"/><path d="M7 0.5V3C7 3.6 7.4 4 8 4H10.5Z" fill="#6c757d"/></svg><span>Tax Filing</span></div>
<div class="frow"><svg width="27" height="27" viewBox="0 0 16 16"><rect x="0.8" y="1.5" width="14.4" height="13.7" rx="1.2" stroke="#6c757d" stroke-width="0.9" fill="none"/><path d="M0.8 2.7A1.2 1.2 0 0 1 2 1.5H14A1.2 1.2 0 0 1 15.2 2.7V4H0.8Z" fill="#6c757d"/><rect x="11" y="6" width="1.6" height="1.6" fill="#6c757d"/><path d="M3.5 0.5V2M12.5 0.5V2" stroke="#6c757d" stroke-width="1"/></svg><span>Dec 27, 2020</span></div>
<div class="bg3" style="bottom:16px"><div><svg width="30" height="30" viewBox="0 0 16 16"><path d="M11.5 1.5L14.5 4.5L5 14L1 15L2 11Z" stroke="#6c757d" stroke-width="0.9" fill="none" stroke-linejoin="round"/><path d="M10 3L13 6M2 11L5 14" stroke="#6c757d" stroke-width="0.9"/><path d="M1 15L1.6 12.6L3.4 14.4Z" fill="#6c757d"/></svg></div><div><svg width="32" height="32" viewBox="0 0 16 16"><path d="M0.8 8C2.5 5 5 3.2 8 3.2S13.5 5 15.2 8C13.5 11 11 12.8 8 12.8S2.5 11 0.8 8Z" stroke="#6c757d" stroke-width="0.9" fill="none"/><circle cx="8" cy="8" r="2.6" stroke="#6c757d" stroke-width="0.9" fill="none"/></svg></div><div><svg width="30" height="30" viewBox="0 0 16 16"><path d="M1 9.5V13.5A1 1 0 0 0 2 14.5H14A1 1 0 0 0 15 13.5V9.5M8 1.5V11M4.8 7.8L8 11L11.2 7.8" stroke="#6c757d" stroke-width="0.9" fill="none"/></svg></div></div>
</div>
</div>
<div class="card" style="left:1355.1px;top:521.0px;height:702px">
<div class="thumb"><div class="tin"><div class="doc" style="left:122.9px;top:43.1px;font: bold 8.2px/9.8px 'Liberation Sans';color:#111;white-space:nowrap">Adobe Acrobat PDF Files</div>
<div class="doc" style="left:54.0px;top:61.0px;width:241.0px;height:9.0px;font:normal normal 6.6px/8px 'Liberation Serif';color:#222;white-space:nowrap;text-align:justify;text-align-last:justify;">Adobe Portable Document Format (PDF) is a universal file format that preserves all of the</div>
<div class="doc" style="left:54.0px;top:69.0px;width:241.0px;height:9.0px;font:normal normal 6.6px/8px 'Liberation Serif';color:#222;white-space:nowrap;text-align:justify;text-align-last:justify;">fonts, formatting, colours and graphics of any source document, regardless of the</div>
<div class="doc" style="left:54.0px;top:77.0px;width:128.4px;height:9.0px;font:normal normal 6.6px/8px 'Liberation Serif';color:#222;white-space:nowrap;">application and platform used to</div>
<div class="doc" style="left:54.0px;top:93.0px;width:241.0px;height:9.0px;font:normal normal 6.6px/8px 'Liberation Serif';color:#222;white-space:nowrap;text-align:justify;text-align-last:justify;">create it. Adobe PDF is an ideal format for electronic document distribution as it</div>
<div class="doc" style="left:54.0px;top:101.0px;width:128.4px;height:9.0px;font:normal normal 6.6px/8px 'Liberation Serif';color:#222;white-space:nowrap;">overcomes the problems commonly</div>
<div class="doc" style="left:55px;top:119.5px;width:3px;height:3px;border-radius:50%;background:#222"></div>
<div class="doc" style="left:64.6px;top:117.0px;width:230.4px;height:9.0px;font:normal normal 6.6px/8px 'Liberation Serif';color:#222;white-space:nowrap;text-align:justify;text-align-last:justify;">PDF file. All you need is the free Adobe Acrobat Reader. Recipients of other file</div>
<div class="doc" style="left:64.6px;top:125.0px;width:230.4px;height:9.0px;font:normal normal 6.6px/8px 'Liberation Serif';color:#222;white-space:nowrap;text-align:justify;text-align-last:justify;">formats sometimes can't open files because they don't have the applications used to</div>
<div class="doc" style="left:64.6px;top:133.0px;width:158.2px;height:9.0px;font:normal normal 6.6px/8px 'Liberation Serif';color:#222;white-space:nowrap;">create the documents. PDF files always print</div>
<div class="doc" style="left:55px;top:152.5px;width:3px;height:3px;border-radius:50%;background:#222"></div>
<div class="doc" style="left:64.6px;top:150.0px;width:146.7px;height:9.0px;font:normal normal 6.6px/8px 'Liberation Serif';color:#222;white-space:nowrap;">correctly on any printing device. PDF files</div>
<div class="doc" style="left:55px;top:168.5px;width:3px;height:3px;border-radius:50%;background:#222"></div>
<div class="doc" style="left:64.6px;top:166.0px;width:230.4px;height:9.0px;font:normal normal 6.6px/8px 'Liberation Serif';color:#222;white-space:nowrap;text-align:justify;text-align-last:justify;">always display exactly as created, regardless of fonts, software, and operating systems.</div>
<div class="doc" style="left:64.6px;top:174.0px;width:230.4px;height:9.0px;font:normal normal 6.6px/8px 'Liberation Serif';color:#222;white-space:nowrap;text-align:justify;text-align-last:justify;">Fonts, and graphics are not lost due to platform, software, and version</div>
<div class="doc" style="left:64.6px;top:182.0px;width:89.1px;height:9.0px;font:normal normal 6.6px/8px 'Liberation Serif';color:#222;white-space:nowrap;">incompatibilities. The</div>
<div class="doc" style="left:55px;top:201.5px;width:3px;height:3px;border-radius:50%;background:#222"></div>
<div class="doc" style="left:64.6px;top:199.0px;width:230.4px;height:9.0px;font:normal normal 6.6px/8px 'Liberation Serif';color:#222;white-space:nowrap;text-align:justify;text-align-last:justify;">free Acrobat Reader is easy to download and can be freely distributed by anyone.</div>
<div class="doc" style="left:64.6px;top:207.0px;width:54.6px;height:9.0px;font:normal normal 6.6px/8px 'Liberation Serif';color:#222;white-space:nowrap;">Compact</div>
<div class="doc" style="left:55px;top:225.5px;width:3px;height:3px;border-radius:50%;background:#222"></div>
<div class="doc" style="left:64.6px;top:223.0px;width:230.4px;height:9.0px;font:normal normal 6.6px/8px 'Liberation Serif';color:#222;white-space:nowrap;text-align:justify;text-align-last:justify;">PDF files are smaller than their source files and download a page at a time for fast</div>
<div class="doc" style="left:64.6px;top:231.0px;width:135.2px;height:9.0px;font:normal normal 6.6px/8px 'Liberation Serif';color:#222;white-space:nowrap;">display on the Web. Adobe Portable</div></div></div>
<div class="tag" style="right:8.5px;top:6px;background:#3a93cb;color:#000">Tag 2</div>
<div class="tag" style="right:8.5px;top:60px;background:#9b44d0;color:#fff">NewOne</div>
<div class="ctitle"><b>Correspondent 2</b>: pdf-sample 10.24.48 PM</div>
<div class="foot" style="height:192px;padding-top:16px">
<div class="frow"><svg style="left:21px;top:2px" width="22" height="27" viewBox="0 0 11 14"><path d="M1.5 0.5H7L10.5 4V12.5C10.5 13 10 13.5 9.5 13.5H1.5C1 13.5 0.5 13 0.5 12.5V1.5C0.5 1 1 0.5 1.5 0.5Z" stroke="#6c757d" stroke-width="0.8" fill="none"/><path d="M7 0.5V3C7 3.6 7.4 4 8 4H10.5Z" fill="#6c757d"/></svg><span>Tax Filing</span></div>
<div class="frow"><svg width="27" height="27" viewBox="0 0 16 16"><rect x="0.8" y="1.5" width="14.4" height="13.7" rx="1.2" stroke="#6c757d" stroke-width="0.9" fill="none"/><path d="M0.8 2.7A1.2 1.2 0 0 1 2 1.5H14A1.2 1.2 0 0 1 15.2 2.7V4H0.8Z" fill="#6c757d"/><rect x="11" y="6" width="1.6" height="1.6" fill="#6c757d"/><path d="M3.5 0.5V2M12.5 0.5V2" stroke="#6c757d" stroke-width="1"/></svg><span>Dec 27, 2020</span></div>
<div class="bg3" style="bottom:16px"><div><svg width="30" height="30" viewBox="0 0 16 16"><path d="M11.5 1.5L14.5 4.5L5 14L1 15L2 11Z" stroke="#6c757d" stroke-width="0.9" fill="none" stroke-linejoin="round"/><path d="M10 3L13 6M2 11L5 14" stroke="#6c757d" stroke-width="0.9"/><path d="M1 15L1.6 12.6L3.4 14.4Z" fill="#6c757d"/></svg></div><div><svg width="32" height="32" viewBox="0 0 16 16"><path d="M0.8 8C2.5 5 5 3.2 8 3.2S13.5 5 15.2 8C13.5 11 11 12.8 8 12.8S2.5 11 0.8 8Z" stroke="#6c757d" stroke-width="0.9" fill="none"/><circle cx="8" cy="8" r="2.6" stroke="#6c757d" stroke-width="0.9" fill="none"/></svg></div><div><svg width="30" height="30" viewBox="0 0 16 16"><path d="M1 9.5V13.5A1 1 0 0 0 2 14.5H14A1 1 0 0 0 15 13.5V9.5M8 1.5V11M4.8 7.8L8 11L11.2 7.8" stroke="#6c757d" stroke-width="0.9" fill="none"/></svg></div></div>
</div>
</div>
<div class="card" style="left:1735.7px;top:521.0px;height:702px">
<div class="thumb"><div class="tin"><div class="doc" style="left:122.9px;top:43.1px;font: bold 8.2px/9.8px 'Liberation Sans';color:#111;white-space:nowrap">Adobe Acrobat PDF Files</div>
<div class="doc" style="left:54.0px;top:61.0px;width:241.0px;height:9.0px;font:normal normal 6.6px/8px 'Liberation Serif';color:#222;white-space:nowrap;text-align:justify;text-align-last:justify;">Adobe Portable Document Format (PDF) is a universal file format that preserves all of the</div>
<div class="doc" style="left:54.0px;top:69.0px;width:241.0px;height:9.0px;font:normal normal 6.6px/8px 'Liberation Serif';color:#222;white-space:nowrap;text-align:justify;text-align-last:justify;">fonts, formatting, colours and graphics of any source document, regardless of the</div>
<div class="doc" style="left:54.0px;top:77.0px;width:128.4px;height:9.0px;font:normal normal 6.6px/8px 'Liberation Serif';color:#222;white-space:nowrap;">application and platform used to</div>
<div class="doc" style="left:54.0px;top:93.0px;width:241.0px;height:9.0px;font:normal normal 6.6px/8px 'Liberation Serif';color:#222;white-space:nowrap;text-align:justify;text-align-last:justify;">create it. Adobe PDF is an ideal format for electronic document distribution as it</div>
<div class="doc" style="left:54.0px;top:101.0px;width:128.4px;height:9.0px;font:normal normal 6.6px/8px 'Liberation Serif';color:#222;white-space:nowrap;">overcomes the problems commonly</div>
<div class="doc" style="left:55px;top:119.5px;width:3px;height:3px;border-radius:50%;background:#222"></div>
<div class="doc" style="left:64.6px;top:117.0px;width:230.4px;height:9.0px;font:normal normal 6.6px/8px 'Liberation Serif';color:#222;white-space:nowrap;text-align:justify;text-align-last:justify;">PDF file. All you need is the free Adobe Acrobat Reader. Recipients of other file</div>
<div class="doc" style="left:64.6px;top:125.0px;width:230.4px;height:9.0px;font:normal normal 6.6px/8px 'Liberation Serif';color:#222;white-space:nowrap;text-align:justify;text-align-last:justify;">formats sometimes can't open files because they don't have the applications used to</div>
<div class="doc" style="left:64.6px;top:133.0px;width:158.2px;height:9.0px;font:normal normal 6.6px/8px 'Liberation Serif';color:#222;white-space:nowrap;">create the documents. PDF files always print</div>
<div class="doc" style="left:55px;top:152.5px;width:3px;height:3px;border-radius:50%;background:#222"></div>
<div class="doc" style="left:64.6px;top:150.0px;width:146.7px;height:9.0px;font:normal normal 6.6px/8px 'Liberation Serif';color:#222;white-space:nowrap;">correctly on any printing device. PDF files</div>
<div class="doc" style="left:55px;top:168.5px;width:3px;height:3px;border-radius:50%;background:#222"></div>
<div class="doc" style="left:64.6px;top:166.0px;width:230.4px;height:9.0px;font:normal normal 6.6px/8px 'Liberation Serif';color:#222;white-space:nowrap;text-align:justify;text-align-last:justify;">always display exactly as created, regardless of fonts, software, and operating systems.</div>
<div class="doc" style="left:64.6px;top:174.0px;width:230.4px;height:9.0px;font:normal normal 6.6px/8px 'Liberation Serif';color:#222;white-space:nowrap;text-align:justify;text-align-last:justify;">Fonts, and graphics are not lost due to platform, software, and version</div>
<div class="doc" style="left:64.6px;top:182.0px;width:89.1px;height:9.0px;font:normal normal 6.6px/8px 'Liberation Serif';color:#222;white-space:nowrap;">incompatibilities. The</div>
<div class="doc" style="left:55px;top:201.5px;width:3px;height:3px;border-radius:50%;background:#222"></div>
<div class="doc" style="left:64.6px;top:199.0px;width:230.4px;height:9.0px;font:normal normal 6.6px/8px 'Liberation Serif';color:#222;white-space:nowrap;text-align:justify;text-align-last:justify;">free Acrobat Reader is easy to download and can be freely distributed by anyone.</div>
<div class="doc" style="left:64.6px;top:207.0px;width:54.6px;height:9.0px;font:normal normal 6.6px/8px 'Liberation Serif';color:#222;white-space:nowrap;">Compact</div>
<div class="doc" style="left:55px;top:225.5px;width:3px;height:3px;border-radius:50%;background:#222"></div>
<div class="doc" style="left:64.6px;top:223.0px;width:230.4px;height:9.0px;font:normal normal 6.6px/8px 'Liberation Serif';color:#222;white-space:nowrap;text-align:justify;text-align-last:justify;">PDF files are smaller than their source files and download a page at a time for fast</div>
<div class="doc" style="left:64.6px;top:231.0px;width:135.2px;height:9.0px;font:normal normal 6.6px/8px 'Liberation Serif';color:#222;white-space:nowrap;">display on the Web. Adobe Portable</div></div></div>
<div class="tag" style="right:8.5px;top:6px;background:#b3df88;color:#000">Tag 3</div>
<div class="ctitle"><b>Correspondent 2</b>: pdf-sample 10.24.48 PM</div>
<div class="foot" style="height:192px;padding-top:16px">
<div class="frow"><svg style="left:21px;top:2px" width="22" height="27" viewBox="0 0 11 14"><path d="M1.5 0.5H7L10.5 4V12.5C10.5 13 10 13.5 9.5 13.5H1.5C1 13.5 0.5 13 0.5 12.5V1.5C0.5 1 1 0.5 1.5 0.5Z" stroke="#6c757d" stroke-width="0.8" fill="none"/><path d="M7 0.5V3C7 3.6 7.4 4 8 4H10.5Z" fill="#6c757d"/></svg><span>Tax Filing</span></div>
<div class="frow"><svg width="27" height="27" viewBox="0 0 16 16"><rect x="0.8" y="1.5" width="14.4" height="13.7" rx="1.2" stroke="#6c757d" stroke-width="0.9" fill="none"/><path d="M0.8 2.7A1.2 1.2 0 0 1 2 1.5H14A1.2 1.2 0 0 1 15.2 2.7V4H0.8Z" fill="#6c757d"/><rect x="11" y="6" width="1.6" height="1.6" fill="#6c757d"/><path d="M3.5 0.5V2M12.5 0.5V2" stroke="#6c757d" stroke-width="1"/></svg><span>Dec 27, 2020</span></div>
<div class="bg3" style="bottom:16px"><div><svg width="30" height="30" viewBox="0 0 16 16"><path d="M11.5 1.5L14.5 4.5L5 14L1 15L2 11Z" stroke="#6c757d" stroke-width="0.9" fill="none" stroke-linejoin="round"/><path d="M10 3L13 6M2 11L5 14" stroke="#6c757d" stroke-width="0.9"/><path d="M1 15L1.6 12.6L3.4 14.4Z" fill="#6c757d"/></svg></div><div><svg width="32" height="32" viewBox="0 0 16 16"><path d="M0.8 8C2.5 5 5 3.2 8 3.2S13.5 5 15.2 8C13.5 11 11 12.8 8 12.8S2.5 11 0.8 8Z" stroke="#6c757d" stroke-width="0.9" fill="none"/><circle cx="8" cy="8" r="2.6" stroke="#6c757d" stroke-width="0.9" fill="none"/></svg></div><div><svg width="30" height="30" viewBox="0 0 16 16"><path d="M1 9.5V13.5A1 1 0 0 0 2 14.5H14A1 1 0 0 0 15 13.5V9.5M8 1.5V11M4.8 7.8L8 11L11.2 7.8" stroke="#6c757d" stroke-width="0.9" fill="none"/></svg></div></div>
</div>
</div>
<div class="card" style="left:2116.3px;top:521.0px;height:702px">
<div class="thumb"><div class="tin"><div class="doc" style="left:122.9px;top:43.1px;font: bold 8.2px/9.8px 'Liberation Sans';color:#111;white-space:nowrap">Adobe Acrobat PDF Files</div>
<div class="doc" style="left:54.0px;top:61.0px;width:241.0px;height:9.0px;font:normal normal 6.6px/8px 'Liberation Serif';color:#222;white-space:nowrap;text-align:justify;text-align-last:justify;">Adobe Portable Document Format (PDF) is a universal file format that preserves all of the</div>
<div class="doc" style="left:54.0px;top:69.0px;width:241.0px;height:9.0px;font:normal normal 6.6px/8px 'Liberation Serif';color:#222;white-space:nowrap;text-align:justify;text-align-last:justify;">fonts, formatting, colours and graphics of any source document, regardless of the</div>
<div class="doc" style="left:54.0px;top:77.0px;width:128.4px;height:9.0px;font:normal normal 6.6px/8px 'Liberation Serif';color:#222;white-space:nowrap;">application and platform used to</div>
<div class="doc" style="left:54.0px;top:93.0px;width:241.0px;height:9.0px;font:normal normal 6.6px/8px 'Liberation Serif';color:#222;white-space:nowrap;text-align:justify;text-align-last:justify;">create it. Adobe PDF is an ideal format for electronic document distribution as it</div>
<div class="doc" style="left:54.0px;top:101.0px;width:128.4px;height:9.0px;font:normal normal 6.6px/8px 'Liberation Serif';color:#222;white-space:nowrap;">overcomes the problems commonly</div>
<div class="doc" style="left:55px;top:119.5px;width:3px;height:3px;border-radius:50%;background:#222"></div>
<div class="doc" style="left:64.6px;top:117.0px;width:230.4px;height:9.0px;font:normal normal 6.6px/8px 'Liberation Serif';color:#222;white-space:nowrap;text-align:justify;text-align-last:justify;">PDF file. All you need is the free Adobe Acrobat Reader. Recipients of other file</div>
<div class="doc" style="left:64.6px;top:125.0px;width:230.4px;height:9.0px;font:normal normal 6.6px/8px 'Liberation Serif';color:#222;white-space:nowrap;text-align:justify;text-align-last:justify;">formats sometimes can't open files because they don't have the applications used to</div>
<div class="doc" style="left:64.6px;top:133.0px;width:158.2px;height:9.0px;font:normal normal 6.6px/8px 'Liberation Serif';color:#222;white-space:nowrap;">create the documents. PDF files always print</div>
<div class="doc" style="left:55px;top:152.5px;width:3px;height:3px;border-radius:50%;background:#222"></div>
<div class="doc" style="left:64.6px;top:150.0px;width:146.7px;height:9.0px;font:normal normal 6.6px/8px 'Liberation Serif';color:#222;white-space:nowrap;">correctly on any printing device. PDF files</div>
<div class="doc" style="left:55px;top:168.5px;width:3px;height:3px;border-radius:50%;background:#222"></div>
<div class="doc" style="left:64.6px;top:166.0px;width:230.4px;height:9.0px;font:normal normal 6.6px/8px 'Liberation Serif';color:#222;white-space:nowrap;text-align:justify;text-align-last:justify;">always display exactly as created, regardless of fonts, software, and operating systems.</div>
<div class="doc" style="left:64.6px;top:174.0px;width:230.4px;height:9.0px;font:normal normal 6.6px/8px 'Liberation Serif';color:#222;white-space:nowrap;text-align:justify;text-align-last:justify;">Fonts, and graphics are not lost due to platform, software, and version</div>
<div class="doc" style="left:64.6px;top:182.0px;width:89.1px;height:9.0px;font:normal normal 6.6px/8px 'Liberation Serif';color:#222;white-space:nowrap;">incompatibilities. The</div>
<div class="doc" style="left:55px;top:201.5px;width:3px;height:3px;border-radius:50%;background:#222"></div>
<div class="doc" style="left:64.6px;top:199.0px;width:230.4px;height:9.0px;font:normal normal 6.6px/8px 'Liberation Serif';color:#222;white-space:nowrap;text-align:justify;text-align-last:justify;">free Acrobat Reader is easy to download and can be freely distributed by anyone.</div>
<div class="doc" style="left:64.6px;top:207.0px;width:54.6px;height:9.0px;font:normal normal 6.6px/8px 'Liberation Serif';color:#222;white-space:nowrap;">Compact</div>
<div class="doc" style="left:55px;top:225.5px;width:3px;height:3px;border-radius:50%;background:#222"></div>
<div class="doc" style="left:64.6px;top:223.0px;width:230.4px;height:9.0px;font:normal normal 6.6px/8px 'Liberation Serif';color:#222;white-space:nowrap;text-align:justify;text-align-last:justify;">PDF files are smaller than their source files and download a page at a time for fast</div>
<div class="doc" style="left:64.6px;top:231.0px;width:135.2px;height:9.0px;font:normal normal 6.6px/8px 'Liberation Serif';color:#222;white-space:nowrap;">display on the Web. Adobe Portable</div></div></div>
<div class="tag" style="right:8.5px;top:6px;background:#f99c98;color:#000">Test Tag</div>
<div class="tag" style="right:8.5px;top:60px;background:#3a93cb;color:#000">Tag 2</div>
<div class="ctitle"><b>Correspondent 2</b>: pdf-sample 10.24.48 PM</div>
<div class="foot" style="height:239px;padding-top:16px">
<div class="frow"><svg style="left:21px;top:2px" width="22" height="27" viewBox="0 0 11 14"><path d="M1.5 0.5H7L10.5 4V12.5C10.5 13 10 13.5 9.5 13.5H1.5C1 13.5 0.5 13 0.5 12.5V1.5C0.5 1 1 0.5 1.5 0.5Z" stroke="#6c757d" stroke-width="0.8" fill="none"/><path d="M7 0.5V3C7 3.6 7.4 4 8 4H10.5Z" fill="#6c757d"/></svg><span>Tax Filing</span></div>
<div class="frow"><svg width="27" height="27" viewBox="0 0 16 16"><path d="M1 4.5V2A1 1 0 0 1 2 1H4.5M11.5 1H14A1 1 0 0 1 15 2V4.5M15 11.5V14A1 1 0 0 1 14 15H11.5M4.5 15H2A1 1 0 0 1 1 14V11.5" stroke="#6c757d" stroke-width="0.9" fill="none"/><path d="M3.8 4V12M5.5 4V12M7.2 4V12M9 4V12M11.8 4V12" stroke="#6c757d" stroke-width="0.8"/><rect x="10" y="4" width="1.2" height="8" fill="#6c757d"/></svg><span>#112412325</span></div>
<div class="frow"><svg width="27" height="27" viewBox="0 0 16 16"><rect x="0.8" y="1.5" width="14.4" height="13.7" rx="1.2" stroke="#6c757d" stroke-width="0.9" fill="none"/><path d="M0.8 2.7A1.2 1.2 0 0 1 2 1.5H14A1.2 1.2 0 0 1 15.2 2.7V4H0.8Z" fill="#6c757d"/><rect x="11" y="6" width="1.6" height="1.6" fill="#6c757d"/><path d="M3.5 0.5V2M12.5 0.5V2" stroke="#6c757d" stroke-width="1"/></svg><span>Dec 27, 2020</span></div>
<div class="bg3" style="bottom:16px"><div><svg width="30" height="30" viewBox="0 0 16 16"><path d="M11.5 1.5L14.5 4.5L5 14L1 15L2 11Z" stroke="#6c757d" stroke-width="0.9" fill="none" stroke-linejoin="round"/><path d="M10 3L13 6M2 11L5 14" stroke="#6c757d" stroke-width="0.9"/><path d="M1 15L1.6 12.6L3.4 14.4Z" fill="#6c757d"/></svg></div><div><svg width="32" height="32" viewBox="0 0 16 16"><path d="M0.8 8C2.5 5 5 3.2 8 3.2S13.5 5 15.2 8C13.5 11 11 12.8 8 12.8S2.5 11 0.8 8Z" stroke="#6c757d" stroke-width="0.9" fill="none"/><circle cx="8" cy="8" r="2.6" stroke="#6c757d" stroke-width="0.9" fill="none"/></svg></div><div><svg width="30" height="30" viewBox="0 0 16 16"><path d="M1 9.5V13.5A1 1 0 0 0 2 14.5H14A1 1 0 0 0 15 13.5V9.5M8 1.5V11M4.8 7.8L8 11L11.2 7.8" stroke="#6c757d" stroke-width="0.9" fill="none"/></svg></div></div>
</div>
</div>
<div class="card" style="left:2496.8px;top:521.0px;height:702px">
<div class="thumb"><div class="tin"><div class="doc" style="left:38px;top:26px;font:15.2px/22px 'Liberation Sans';color:#222;white-space:nowrap">A Simple PDF File</div>
<div class="doc" style="left:41.0px;top:54.0px;width:117.9px;height:7.8px;font:normal normal 5.2px/6.8px 'Liberation Sans';color:#333;white-space:nowrap;">This is a small demonstration .pdf file -</div>
<div class="doc" style="left:41.0px;top:68.0px;width:178.0px;height:7.8px;font:normal normal 5.2px/6.8px 'Liberation Sans';color:#333;white-space:nowrap;text-align:justify;text-align-last:justify;">just for use in the Virtual Mechanics tutorials. More text. And more text. And</div>
<div class="doc" style="left:41.0px;top:74.8px;width:135.7px;height:7.8px;font:normal normal 5.2px/6.8px 'Liberation Sans';color:#333;white-space:nowrap;">more text. And more text. And more text. just</div>
<div class="doc" style="left:41.0px;top:88.5px;width:178.0px;height:7.8px;font:normal normal 5.2px/6.8px 'Liberation Sans';color:#333;white-space:nowrap;text-align:justify;text-align-last:justify;">And more text. And more text. And more text. And more text. And more text.</div>
<div class="doc" style="left:41.0px;top:95.3px;width:178.0px;height:7.8px;font:normal normal 5.2px/6.8px 'Liberation Sans';color:#333;white-space:nowrap;text-align:justify;text-align-last:justify;">And more text. Boring, zzzzz. And more text. And more text. And more text.</div>
<div class="doc" style="left:41.0px;top:102.1px;width:178.0px;height:7.8px;font:normal normal 5.2px/6.8px 'Liberation Sans';color:#333;white-space:nowrap;text-align:justify;text-align-last:justify;">And more text. And more text. And more text. And more text. And more text.</div>
<div class="doc" style="left:41.0px;top:108.9px;width:94.8px;height:7.8px;font:normal normal 5.2px/6.8px 'Liberation Sans';color:#333;white-space:nowrap;">Even more. Continued on</div>
<div class="doc" style="left:41.0px;top:122.3px;width:178.0px;height:7.8px;font:normal normal 5.2px/6.8px 'Liberation Sans';color:#333;white-space:nowrap;text-align:justify;text-align-last:justify;">page 2 ... And more text. And more text. And more text. And more text. And</div>
<div class="doc" style="left:41.0px;top:129.1px;width:94.8px;height:7.8px;font:normal normal 5.2px/6.8px 'Liberation Sans';color:#333;white-space:nowrap;">more text. And more text.</div></div></div>
<div class="tag" style="right:8.5px;top:6px;background:#3d2cb5;color:#fff">TagWithPartial</div>
<div class="ctitle"><b>Correspondent 2</b>: sample</div>
<div class="foot" style="height:239px;padding-top:16px">
<div class="frow"><svg style="left:21px;top:2px" width="22" height="27" viewBox="0 0 11 14"><path d="M1.5 0.5H7L10.5 4V12.5C10.5 13 10 13.5 9.5 13.5H1.5C1 13.5 0.5 13 0.5 12.5V1.5C0.5 1 1 0.5 1.5 0.5Z" stroke="#6c757d" stroke-width="0.8" fill="none"/><path d="M7 0.5V3C7 3.6 7.4 4 8 4H10.5Z" fill="#6c757d"/></svg><span>Invoice</span></div>
<div class="frow"><svg width="27" height="27" viewBox="0 0 16 16"><path d="M1 4.5V2A1 1 0 0 1 2 1H4.5M11.5 1H14A1 1 0 0 1 15 2V4.5M15 11.5V14A1 1 0 0 1 14 15H11.5M4.5 15H2A1 1 0 0 1 1 14V11.5" stroke="#6c757d" stroke-width="0.9" fill="none"/><path d="M3.8 4V12M5.5 4V12M7.2 4V12M9 4V12M11.8 4V12" stroke="#6c757d" stroke-width="0.8"/><rect x="10" y="4" width="1.2" height="8" fill="#6c757d"/></svg><span>#1123</span></div>
<div class="frow"><svg width="27" height="27" viewBox="0 0 16 16"><rect x="0.8" y="1.5" width="14.4" height="13.7" rx="1.2" stroke="#6c757d" stroke-width="0.9" fill="none"/><path d="M0.8 2.7A1.2 1.2 0 0 1 2 1.5H14A1.2 1.2 0 0 1 15.2 2.7V4H0.8Z" fill="#6c757d"/><rect x="11" y="6" width="1.6" height="1.6" fill="#6c757d"/><path d="M3.5 0.5V2M12.5 0.5V2" stroke="#6c757d" stroke-width="1"/></svg><span>Jan 20, 2021</span></div>
<div class="bg3" style="bottom:16px"><div><svg width="30" height="30" viewBox="0 0 16 16"><path d="M11.5 1.5L14.5 4.5L5 14L1 15L2 11Z" stroke="#6c757d" stroke-width="0.9" fill="none" stroke-linejoin="round"/><path d="M10 3L13 6M2 11L5 14" stroke="#6c757d" stroke-width="0.9"/><path d="M1 15L1.6 12.6L3.4 14.4Z" fill="#6c757d"/></svg></div><div><svg width="32" height="32" viewBox="0 0 16 16"><path d="M0.8 8C2.5 5 5 3.2 8 3.2S13.5 5 15.2 8C13.5 11 11 12.8 8 12.8S2.5 11 0.8 8Z" stroke="#6c757d" stroke-width="0.9" fill="none"/><circle cx="8" cy="8" r="2.6" stroke="#6c757d" stroke-width="0.9" fill="none"/></svg></div><div><svg width="30" height="30" viewBox="0 0 16 16"><path d="M1 9.5V13.5A1 1 0 0 0 2 14.5H14A1 1 0 0 0 15 13.5V9.5M8 1.5V11M4.8 7.8L8 11L11.2 7.8" stroke="#6c757d" stroke-width="0.9" fill="none"/></svg></div></div>
</div>
</div>
<div class="card" style="left:2877.4px;top:521.0px;height:702px">
<div class="thumb"><div class="tin"><div class="doc" style="left:38px;top:26px;font:15.2px/22px 'Liberation Sans';color:#222;white-space:nowrap">A Simple PDF File</div>
<div class="doc" style="left:41.0px;top:54.0px;width:117.9px;height:7.8px;font:normal normal 5.2px/6.8px 'Liberation Sans';color:#333;white-space:nowrap;">This is a small demonstration .pdf file -</div>
<div class="doc" style="left:41.0px;top:68.0px;width:178.0px;height:7.8px;font:normal normal 5.2px/6.8px 'Liberation Sans';color:#333;white-space:nowrap;text-align:justify;text-align-last:justify;">just for use in the Virtual Mechanics tutorials. More text. And more text. And</div>
<div class="doc" style="left:41.0px;top:74.8px;width:135.7px;height:7.8px;font:normal normal 5.2px/6.8px 'Liberation Sans';color:#333;white-space:nowrap;">more text. And more text. And more text. just</div>
<div class="doc" style="left:41.0px;top:88.5px;width:178.0px;height:7.8px;font:normal normal 5.2px/6.8px 'Liberation Sans';color:#333;white-space:nowrap;text-align:justify;text-align-last:justify;">And more text. And more text. And more text. And more text. And more text.</div>
<div class="doc" style="left:41.0px;top:95.3px;width:178.0px;height:7.8px;font:normal normal 5.2px/6.8px 'Liberation Sans';color:#333;white-space:nowrap;text-align:justify;text-align-last:justify;">And more text. Boring, zzzzz. And more text. And more text. And more text.</div>
<div class="doc" style="left:41.0px;top:102.1px;width:178.0px;height:7.8px;font:normal normal 5.2px/6.8px 'Liberation Sans';color:#333;white-space:nowrap;text-align:justify;text-align-last:justify;">And more text. And more text. And more text. And more text. And more text.</div>
<div class="doc" style="left:41.0px;top:108.9px;width:94.8px;height:7.8px;font:normal normal 5.2px/6.8px 'Liberation Sans';color:#333;white-space:nowrap;">Even more. Continued on</div>
<div class="doc" style="left:41.0px;top:122.3px;width:178.0px;height:7.8px;font:normal normal 5.2px/6.8px 'Liberation Sans';color:#333;white-space:nowrap;text-align:justify;text-align-last:justify;">page 2 ... And more text. And more text. And more text. And more text. And</div>
<div class="doc" style="left:41.0px;top:129.1px;width:94.8px;height:7.8px;font:normal normal 5.2px/6.8px 'Liberation Sans';color:#333;white-space:nowrap;">more text. And more text.</div></div></div>
<div class="tag" style="right:8.5px;top:6px;background:#f99c98;color:#000">Test Tag</div>
<div class="ctitle"><b>Correspondent 2</b>: sample</div>
<div class="foot" style="height:192px;padding-top:16px">
<div class="frow"><svg style="left:21px;top:2px" width="22" height="27" viewBox="0 0 11 14"><path d="M1.5 0.5H7L10.5 4V12.5C10.5 13 10 13.5 9.5 13.5H1.5C1 13.5 0.5 13 0.5 12.5V1.5C0.5 1 1 0.5 1.5 0.5Z" stroke="#6c757d" stroke-width="0.8" fill="none"/><path d="M7 0.5V3C7 3.6 7.4 4 8 4H10.5Z" fill="#6c757d"/></svg><span>Invoice</span></div>
<div class="frow"><svg width="27" height="27" viewBox="0 0 16 16"><rect x="0.8" y="1.5" width="14.4" height="13.7" rx="1.2" stroke="#6c757d" stroke-width="0.9" fill="none"/><path d="M0.8 2.7A1.2 1.2 0 0 1 2 1.5H14A1.2 1.2 0 0 1 15.2 2.7V4H0.8Z" fill="#6c757d"/><rect x="11" y="6" width="1.6" height="1.6" fill="#6c757d"/><path d="M3.5 0.5V2M12.5 0.5V2" stroke="#6c757d" stroke-width="1"/></svg><span>Jan 20, 2021</span></div>
<div class="bg3" style="bottom:16px"><div><svg width="30" height="30" viewBox="0 0 16 16"><path d="M11.5 1.5L14.5 4.5L5 14L1 15L2 11Z" stroke="#6c757d" stroke-width="0.9" fill="none" stroke-linejoin="round"/><path d="M10 3L13 6M2 11L5 14" stroke="#6c757d" stroke-width="0.9"/><path d="M1 15L1.6 12.6L3.4 14.4Z" fill="#6c757d"/></svg></div><div><svg width="32" height="32" viewBox="0 0 16 16"><path d="M0.8 8C2.5 5 5 3.2 8 3.2S13.5 5 15.2 8C13.5 11 11 12.8 8 12.8S2.5 11 0.8 8Z" stroke="#6c757d" stroke-width="0.9" fill="none"/><circle cx="8" cy="8" r="2.6" stroke="#6c757d" stroke-width="0.9" fill="none"/></svg></div><div><svg width="30" height="30" viewBox="0 0 16 16"><path d="M1 9.5V13.5A1 1 0 0 0 2 14.5H14A1 1 0 0 0 15 13.5V9.5M8 1.5V11M4.8 7.8L8 11L11.2 7.8" stroke="#6c757d" stroke-width="0.9" fill="none"/></svg></div></div>
</div>
</div>
<div class="card" style="left:594.0px;top:1255.7px;height:655px">
<div class="thumb"><div class="tin"><div class="doc" style="left:38px;top:26px;font:15.2px/22px 'Liberation Sans';color:#222;white-space:nowrap">A Simple PDF File</div>
<div class="doc" style="left:41.0px;top:54.0px;width:117.9px;height:7.8px;font:normal normal 5.2px/6.8px 'Liberation Sans';color:#333;white-space:nowrap;">This is a small demonstration .pdf file -</div>
<div class="doc" style="left:41.0px;top:68.0px;width:178.0px;height:7.8px;font:normal normal 5.2px/6.8px 'Liberation Sans';color:#333;white-space:nowrap;text-align:justify;text-align-last:justify;">just for use in the Virtual Mechanics tutorials. More text. And more text. And</div>
<div class="doc" style="left:41.0px;top:74.8px;width:135.7px;height:7.8px;font:normal normal 5.2px/6.8px 'Liberation Sans';color:#333;white-space:nowrap;">more text. And more text. And more text. just</div>
<div class="doc" style="left:41.0px;top:88.5px;width:178.0px;height:7.8px;font:normal normal 5.2px/6.8px 'Liberation Sans';color:#333;white-space:nowrap;text-align:justify;text-align-last:justify;">And more text. And more text. And more text. And more text. And more text.</div>
<div class="doc" style="left:41.0px;top:95.3px;width:178.0px;height:7.8px;font:normal normal 5.2px/6.8px 'Liberation Sans';color:#333;white-space:nowrap;text-align:justify;text-align-last:justify;">And more text. Boring, zzzzz. And more text. And more text. And more text.</div>
<div class="doc" style="left:41.0px;top:102.1px;width:178.0px;height:7.8px;font:normal normal 5.2px/6.8px 'Liberation Sans';color:#333;white-space:nowrap;text-align:justify;text-align-last:justify;">And more text. And more text. And more text. And more text. And more text.</div>
<div class="doc" style="left:41.0px;top:108.9px;width:94.8px;height:7.8px;font:normal normal 5.2px/6.8px 'Liberation Sans';color:#333;white-space:nowrap;">Even more. Continued on</div>
<div class="doc" style="left:41.0px;top:122.3px;width:178.0px;height:7.8px;font:normal normal 5.2px/6.8px 'Liberation Sans';color:#333;white-space:nowrap;text-align:justify;text-align-last:justify;">page 2 ... And more text. And more text. And more text. And more text. And</div>
<div class="doc" style="left:41.0px;top:129.1px;width:94.8px;height:7.8px;font:normal normal 5.2px/6.8px 'Liberation Sans';color:#333;white-space:nowrap;">more text. And more text.</div></div></div>
<div class="tag" style="right:8.5px;top:6px;background:#f99c98;color:#000">Test Tag</div>
<div class="ctitle"><b>Correspondent 2</b>: asample</div>
<div class="foot" style="height:192px;padding-top:16px">
<div class="frow"><svg style="left:21px;top:2px" width="22" height="27" viewBox="0 0 11 14"><path d="M1.5 0.5H7L10.5 4V12.5C10.5 13 10 13.5 9.5 13.5H1.5C1 13.5 0.5 13 0.5 12.5V1.5C0.5 1 1 0.5 1.5 0.5Z" stroke="#6c757d" stroke-width="0.8" fill="none"/><path d="M7 0.5V3C7 3.6 7.4 4 8 4H10.5Z" fill="#6c757d"/></svg><span>Invoice</span></div>
<div class="frow"><svg width="27" height="27" viewBox="0 0 16 16"><rect x="0.8" y="1.5" width="14.4" height="13.7" rx="1.2" stroke="#6c757d" stroke-width="0.9" fill="none"/><path d="M0.8 2.7A1.2 1.2 0 0 1 2 1.5H14A1.2 1.2 0 0 1 15.2 2.7V4H0.8Z" fill="#6c757d"/><rect x="11" y="6" width="1.6" height="1.6" fill="#6c757d"/><path d="M3.5 0.5V2M12.5 0.5V2" stroke="#6c757d" stroke-width="1"/></svg><span>Jan 20, 2021</span></div>
<div class="bg3" style="bottom:16px"><div><svg width="30" height="30" viewBox="0 0 16 16"><path d="M11.5 1.5L14.5 4.5L5 14L1 15L2 11Z" stroke="#6c757d" stroke-width="0.9" fill="none" stroke-linejoin="round"/><path d="M10 3L13 6M2 11L5 14" stroke="#6c757d" stroke-width="0.9"/><path d="M1 15L1.6 12.6L3.4 14.4Z" fill="#6c757d"/></svg></div><div><svg width="32" height="32" viewBox="0 0 16 16"><path d="M0.8 8C2.5 5 5 3.2 8 3.2S13.5 5 15.2 8C13.5 11 11 12.8 8 12.8S2.5 11 0.8 8Z" stroke="#6c757d" stroke-width="0.9" fill="none"/><circle cx="8" cy="8" r="2.6" stroke="#6c757d" stroke-width="0.9" fill="none"/></svg></div><div><svg width="30" height="30" viewBox="0 0 16 16"><path d="M1 9.5V13.5A1 1 0 0 0 2 14.5H14A1 1 0 0 0 15 13.5V9.5M8 1.5V11M4.8 7.8L8 11L11.2 7.8" stroke="#6c757d" stroke-width="0.9" fill="none"/></svg></div></div>
</div>
</div>
<div class="card" style="left:974.6px;top:1255.7px;height:655px">
<div class="thumb"><div class="tin"><div class="doc" style="left:41.0px;top:43.0px;width:264.0px;height:7.8px;font:normal normal 5.5px/6.85px 'Liberation Sans';color:#333;white-space:nowrap;text-align:justify;text-align-last:justify;"><b>Lorem Ipsum</b> is simply dummy text of the printing and typesetting industry. Lorem Ipsum has been the</div>
<div class="doc" style="left:41.0px;top:49.9px;width:264.0px;height:7.8px;font:normal normal 5.5px/6.85px 'Liberation Sans';color:#333;white-space:nowrap;text-align:justify;text-align-last:justify;">industry's standard dummy text ever since the 1500s, when an unknown printer took a galley of type and</div>
<div class="doc" style="left:41.0px;top:56.7px;width:264.0px;height:7.8px;font:normal normal 5.5px/6.85px 'Liberation Sans';color:#333;white-space:nowrap;text-align:justify;text-align-last:justify;">scrambled it to make a type specimen book. It has survived not only five centuries, but also the leap into</div>
<div class="doc" style="left:41.0px;top:63.6px;width:264.0px;height:7.8px;font:normal normal 5.5px/6.85px 'Liberation Sans';color:#333;white-space:nowrap;text-align:justify;text-align-last:justify;">electronic typesetting, remaining essentially unchanged. It was popularised in the 1960s with the release of</div>
<div class="doc" style="left:41.0px;top:70.4px;width:264.0px;height:7.8px;font:normal normal 5.5px/6.85px 'Liberation Sans';color:#333;white-space:nowrap;text-align:justify;text-align-last:justify;">Letraset sheets containing Lorem Ipsum passages, and more recently with desktop publishing software like</div>
<div class="doc" style="left:41.0px;top:77.2px;width:244.4px;height:7.8px;font:normal normal 5.5px/6.85px 'Liberation Sans';color:#333;white-space:nowrap;">Aldus PageMaker including versions of Lorem Ipsum. Lorem Ipsum is simply dummy</div>
<div class="doc" style="left:41.0px;top:98.5px;width:264.0px;height:7.8px;font:normal normal 5.5px/6.85px 'Liberation Sans';color:#333;white-space:nowrap;text-align:justify;text-align-last:justify;"><b>Lorem Ipsum</b> is simply dummy text of the printing and typesetting industry. Lorem Ipsum has been the</div>
<div class="doc" style="left:41.0px;top:105.3px;width:264.0px;height:7.8px;font:normal normal 5.5px/6.85px 'Liberation Sans';color:#333;white-space:nowrap;text-align:justify;text-align-last:justify;">industry's standard dummy text ever since the 1500s, when an unknown printer took a galley of type and</div>
<div class="doc" style="left:41.0px;top:112.2px;width:264.0px;height:7.8px;font:normal normal 5.5px/6.85px 'Liberation Sans';color:#333;white-space:nowrap;text-align:justify;text-align-last:justify;">scrambled it to make a type specimen book. It has survived not only five centuries, but also the leap into</div>
<div class="doc" style="left:41.0px;top:119.0px;width:264.0px;height:7.8px;font:normal normal 5.5px/6.85px 'Liberation Sans';color:#333;white-space:nowrap;text-align:justify;text-align-last:justify;">electronic typesetting, remaining essentially unchanged. It was popularised in the 1960s with the release of</div>
<div class="doc" style="left:41.0px;top:125.9px;width:264.0px;height:7.8px;font:normal normal 5.5px/6.85px 'Liberation Sans';color:#333;white-space:nowrap;text-align:justify;text-align-last:justify;">Letraset sheets containing Lorem Ipsum passages, and more recently with desktop publishing software like</div>
<div class="doc" style="left:41.0px;top:132.7px;width:244.4px;height:7.8px;font:normal normal 5.5px/6.85px 'Liberation Sans';color:#333;white-space:nowrap;">Aldus PageMaker including versions of Lorem Ipsum. Lorem Ipsum is simply dummy</div>
<div class="doc" style="left:41.0px;top:154.0px;width:264.0px;height:7.8px;font:normal normal 5.5px/6.85px 'Liberation Sans';color:#333;white-space:nowrap;text-align:justify;text-align-last:justify;"><b>Lorem Ipsum</b> is simply dummy text of the printing and typesetting industry. Lorem Ipsum has been the</div>
<div class="doc" style="left:41.0px;top:160.8px;width:264.0px;height:7.8px;font:normal normal 5.5px/6.85px 'Liberation Sans';color:#333;white-space:nowrap;text-align:justify;text-align-last:justify;">industry's standard dummy text ever since the 1500s, when an unknown printer took a galley of type and</div>
<div class="doc" style="left:41.0px;top:167.7px;width:264.0px;height:7.8px;font:normal normal 5.5px/6.85px 'Liberation Sans';color:#333;white-space:nowrap;text-align:justify;text-align-last:justify;">scrambled it to make a type specimen book. It has survived not only five centuries, but also the leap into</div>
<div class="doc" style="left:41.0px;top:174.5px;width:264.0px;height:7.8px;font:normal normal 5.5px/6.85px 'Liberation Sans';color:#333;white-space:nowrap;text-align:justify;text-align-last:justify;">electronic typesetting, remaining essentially unchanged. It was popularised in the 1960s with the release of</div>
<div class="doc" style="left:41.0px;top:181.4px;width:264.0px;height:7.8px;font:normal normal 5.5px/6.85px 'Liberation Sans';color:#333;white-space:nowrap;text-align:justify;text-align-last:justify;">Letraset sheets containing Lorem Ipsum passages, and more recently with desktop publishing software like</div>
<div class="doc" style="left:41.0px;top:188.2px;width:244.4px;height:7.8px;font:normal normal 5.5px/6.85px 'Liberation Sans';color:#333;white-space:nowrap;">Aldus PageMaker including versions of Lorem Ipsum. Lorem Ipsum is simply dummy</div>
<div class="doc" style="left:41.0px;top:209.5px;width:264.0px;height:7.8px;font:normal normal 5.5px/6.85px 'Liberation Sans';color:#333;white-space:nowrap;text-align:justify;text-align-last:justify;"><b>Lorem Ipsum</b> is simply dummy text of the printing and typesetting industry. Lorem Ipsum has been the</div>
<div class="doc" style="left:41.0px;top:216.3px;width:264.0px;height:7.8px;font:normal normal 5.5px/6.85px 'Liberation Sans';color:#333;white-space:nowrap;text-align:justify;text-align-last:justify;">industry's standard dummy text ever since the 1500s, when an unknown printer took a galley of type and</div>
<div class="doc" style="left:41.0px;top:223.2px;width:264.0px;height:7.8px;font:normal normal 5.5px/6.85px 'Liberation Sans';color:#333;white-space:nowrap;text-align:justify;text-align-last:justify;">scrambled it to make a type specimen book. It has survived not only five centuries, but also the leap into</div>
<div class="doc" style="left:41.0px;top:230.0px;width:264.0px;height:7.8px;font:normal normal 5.5px/6.85px 'Liberation Sans';color:#333;white-space:nowrap;text-align:justify;text-align-last:justify;">electronic typesetting, remaining essentially unchanged. It was popularised in the 1960s with the release of</div>
<div class="doc" style="left:41.0px;top:236.9px;width:264.0px;height:7.8px;font:normal normal 5.5px/6.85px 'Liberation Sans';color:#333;white-space:nowrap;text-align:justify;text-align-last:justify;">Letraset sheets containing Lorem Ipsum passages, and more recently with desktop publishing software like</div>
<div class="doc" style="left:41.0px;top:243.7px;width:244.4px;height:7.8px;font:normal normal 5.5px/6.85px 'Liberation Sans';color:#333;white-space:nowrap;">Aldus PageMaker including versions of Lorem Ipsum. Lorem Ipsum is simply dummy</div>
<div class="doc" style="left:41.0px;top:265.0px;width:264.0px;height:7.8px;font:normal normal 5.5px/6.85px 'Liberation Sans';color:#333;white-space:nowrap;text-align:justify;text-align-last:justify;"><b>Lorem Ipsum</b> is simply dummy text of the printing and typesetting industry. Lorem Ipsum has been the</div>
<div class="doc" style="left:41.0px;top:271.9px;width:264.0px;height:7.8px;font:normal normal 5.5px/6.85px 'Liberation Sans';color:#333;white-space:nowrap;text-align:justify;text-align-last:justify;">industry's standard dummy text ever since the 1500s, when an unknown printer took a galley of type and</div>
<div class="doc" style="left:41.0px;top:278.7px;width:264.0px;height:7.8px;font:normal normal 5.5px/6.85px 'Liberation Sans';color:#333;white-space:nowrap;text-align:justify;text-align-last:justify;">scrambled it to make a type specimen book. It has survived not only five centuries, but also the leap into</div>
<div class="doc" style="left:41.0px;top:285.6px;width:264.0px;height:7.8px;font:normal normal 5.5px/6.85px 'Liberation Sans';color:#333;white-space:nowrap;text-align:justify;text-align-last:justify;">electronic typesetting, remaining essentially unchanged. It was popularised in the 1960s with the release of</div>
<div class="doc" style="left:41.0px;top:292.4px;width:264.0px;height:7.8px;font:normal normal 5.5px/6.85px 'Liberation Sans';color:#333;white-space:nowrap;text-align:justify;text-align-last:justify;">Letraset sheets containing Lorem Ipsum passages, and more recently with desktop publishing software like</div>
<div class="doc" style="left:41.0px;top:299.3px;width:244.4px;height:7.8px;font:normal normal 5.5px/6.85px 'Liberation Sans';color:#333;white-space:nowrap;">Aldus PageMaker including versions of Lorem Ipsum. Lorem Ipsum is simply dummy</div>
<div class="doc" style="left:41.0px;top:320.5px;width:264.0px;height:7.8px;font:normal normal 5.5px/6.85px 'Liberation Sans';color:#333;white-space:nowrap;text-align:justify;text-align-last:justify;"><b>Lorem Ipsum</b> is simply dummy text of the printing and typesetting industry. Lorem Ipsum has been the</div>
<div class="doc" style="left:41.0px;top:327.4px;width:264.0px;height:7.8px;font:normal normal 5.5px/6.85px 'Liberation Sans';color:#333;white-space:nowrap;text-align:justify;text-align-last:justify;">industry's standard dummy text ever since the 1500s, when an unknown printer took a galley of type and</div>
<div class="doc" style="left:41.0px;top:334.2px;width:264.0px;height:7.8px;font:normal normal 5.5px/6.85px 'Liberation Sans';color:#333;white-space:nowrap;text-align:justify;text-align-last:justify;">scrambled it to make a type specimen book. It has survived not only five centuries, but also the leap into</div>
<div class="doc" style="left:41.0px;top:341.1px;width:264.0px;height:7.8px;font:normal normal 5.5px/6.85px 'Liberation Sans';color:#333;white-space:nowrap;text-align:justify;text-align-last:justify;">electronic typesetting, remaining essentially unchanged. It was popularised in the 1960s with the release of</div>
<div class="doc" style="left:41.0px;top:347.9px;width:264.0px;height:7.8px;font:normal normal 5.5px/6.85px 'Liberation Sans';color:#333;white-space:nowrap;text-align:justify;text-align-last:justify;">Letraset sheets containing Lorem Ipsum passages, and more recently with desktop publishing software like</div>
<div class="doc" style="left:41.0px;top:354.8px;width:244.4px;height:7.8px;font:normal normal 5.5px/6.85px 'Liberation Sans';color:#333;white-space:nowrap;">Aldus PageMaker including versions of Lorem Ipsum. Lorem Ipsum is simply dummy</div>
<div class="doc" style="left:41.0px;top:376.0px;width:264.0px;height:7.8px;font:normal normal 5.5px/6.85px 'Liberation Sans';color:#333;white-space:nowrap;text-align:justify;text-align-last:justify;"><b>Lorem Ipsum</b> is simply dummy text of the printing and typesetting industry. Lorem Ipsum has been the</div>
<div class="doc" style="left:41.0px;top:382.9px;width:264.0px;height:7.8px;font:normal normal 5.5px/6.85px 'Liberation Sans';color:#333;white-space:nowrap;text-align:justify;text-align-last:justify;">industry's standard dummy text ever since the 1500s, when an unknown printer took a galley of type and</div>
<div class="doc" style="left:41.0px;top:389.7px;width:264.0px;height:7.8px;font:normal normal 5.5px/6.85px 'Liberation Sans';color:#333;white-space:nowrap;text-align:justify;text-align-last:justify;">scrambled it to make a type specimen book. It has survived not only five centuries, but also the leap into</div>
<div class="doc" style="left:41.0px;top:396.6px;width:264.0px;height:7.8px;font:normal normal 5.5px/6.85px 'Liberation Sans';color:#333;white-space:nowrap;text-align:justify;text-align-last:justify;">electronic typesetting, remaining essentially unchanged. It was popularised in the 1960s with the release of</div>
<div class="doc" style="left:41.0px;top:403.4px;width:264.0px;height:7.8px;font:normal normal 5.5px/6.85px 'Liberation Sans';color:#333;white-space:nowrap;text-align:justify;text-align-last:justify;">Letraset sheets containing Lorem Ipsum passages, and more recently with desktop publishing software like</div>
<div class="doc" style="left:41.0px;top:410.3px;width:244.4px;height:7.8px;font:normal normal 5.5px/6.85px 'Liberation Sans';color:#333;white-space:nowrap;">Aldus PageMaker including versions of Lorem Ipsum. Lorem Ipsum is simply dummy</div></div></div>
<div class="tag" style="right:8.5px;top:6px;background:#f99c98;color:#000">Test Tag</div>
<div class="tag" style="right:8.5px;top:60px;background:#b3df88;color:#000">Tag 3</div>
<div class="ctitle"><b>Test Correspondent</b>: sample-pdf-file</div>
<div class="foot" style="height:192px;padding-top:16px">
<div class="frow"><svg style="left:21px;top:2px" width="22" height="27" viewBox="0 0 11 14"><path d="M1.5 0.5H7L10.5 4V12.5C10.5 13 10 13.5 9.5 13.5H1.5C1 13.5 0.5 13 0.5 12.5V1.5C0.5 1 1 0.5 1.5 0.5Z" stroke="#6c757d" stroke-width="0.8" fill="none"/><path d="M7 0.5V3C7 3.6 7.4 4 8 4H10.5Z" fill="#6c757d"/></svg><span>Letter</span></div>
<div class="frow"><svg width="27" height="27" viewBox="0 0 16 16"><rect x="0.8" y="1.5" width="14.4" height="13.7" rx="1.2" stroke="#6c757d" stroke-width="0.9" fill="none"/><path d="M0.8 2.7A1.2 1.2 0 0 1 2 1.5H14A1.2 1.2 0 0 1 15.2 2.7V4H0.8Z" fill="#6c757d"/><rect x="11" y="6" width="1.6" height="1.6" fill="#6c757d"/><path d="M3.5 0.5V2M12.5 0.5V2" stroke="#6c757d" stroke-width="1"/></svg><span>Jan 20, 2021</span></div>
<div class="bg3" style="bottom:16px"><div><svg width="30" height="30" viewBox="0 0 16 16"><path d="M11.5 1.5L14.5 4.5L5 14L1 15L2 11Z" stroke="#6c757d" stroke-width="0.9" fill="none" stroke-linejoin="round"/><path d="M10 3L13 6M2 11L5 14" stroke="#6c757d" stroke-width="0.9"/><path d="M1 15L1.6 12.6L3.4 14.4Z" fill="#6c757d"/></svg></div><div><svg width="32" height="32" viewBox="0 0 16 16"><path d="M0.8 8C2.5 5 5 3.2 8 3.2S13.5 5 15.2 8C13.5 11 11 12.8 8 12.8S2.5 11 0.8 8Z" stroke="#6c757d" stroke-width="0.9" fill="none"/><circle cx="8" cy="8" r="2.6" stroke="#6c757d" stroke-width="0.9" fill="none"/></svg></div><div><svg width="30" height="30" viewBox="0 0 16 16"><path d="M1 9.5V13.5A1 1 0 0 0 2 14.5H14A1 1 0 0 0 15 13.5V9.5M8 1.5V11M4.8 7.8L8 11L11.2 7.8" stroke="#6c757d" stroke-width="0.9" fill="none"/></svg></div></div>
</div>
</div>
<div class="card" style="left:1355.1px;top:1255.7px;height:655px">
<div class="thumb"><div class="tin"><svg class="doc" style="left:43px;top:44px" width="262" height="173" viewBox="0 0 262 173"><rect width="262" height="173" fill="#34502c"/><ellipse cx="89.7" cy="42.5" rx="3.4" ry="5.3" fill="#0f1c16" transform="rotate(-32 89.7 42.5)"/><ellipse cx="73.6" cy="54.8" rx="4.7" ry="2.3" fill="#0f1c16" transform="rotate(-7 73.6 54.8)"/><ellipse cx="58.6" cy="46.2" rx="3.5" ry="4.3" fill="#0f1c16" transform="rotate(36 58.6 46.2)"/><ellipse cx="75.7" cy="47.0" rx="3.5" ry="4.3" fill="#0f1c16" transform="rotate(-36 75.7 47.0)"/><ellipse cx="57.7" cy="46.4" rx="4.1" ry="3.7" fill="#0f1c16" transform="rotate(3 57.7 46.4)"/><ellipse cx="111.6" cy="67.6" rx="4.4" ry="4.3" fill="#0f1c16" transform="rotate(11 111.6 67.6)"/><ellipse cx="114.4" cy="61.1" rx="3.5" ry="2.2" fill="#0f1c16" transform="rotate(-24 114.4 61.1)"/><ellipse cx="127.9" cy="58.3" rx="5.5" ry="4.3" fill="#0f1c16" transform="rotate(-4 127.9 58.3)"/><ellipse cx="111.2" cy="67.1" rx="8.6" ry="3.0" fill="#0f1c16" transform="rotate(6 111.2 67.1)"/><ellipse cx="121.1" cy="69.0" rx="8.8" ry="3.2" fill="#0f1c16" transform="rotate(38 121.1 69.0)"/><ellipse cx="103.2" cy="58.0" rx="9.1" ry="2.6" fill="#0f1c16" transform="rotate(-1 103.2 58.0)"/><ellipse cx="99.7" cy="64.0" rx="9.1" ry="4.3" fill="#0f1c16" transform="rotate(30 99.7 64.0)"/><ellipse cx="33.0" cy="96.4" rx="7.0" ry="5.2" fill="#0f1c16" transform="rotate(-34 33.0 96.4)"/><ellipse cx="22.1" cy="94.5" rx="8.6" ry="2.3" fill="#0f1c16" transform="rotate(18 22.1 94.5)"/><ellipse cx="31.6" cy="101.9" rx="8.4" ry="3.8" fill="#0f1c16" transform="rotate(17 31.6 101.9)"/><ellipse cx="57.0" cy="96.3" rx="10.5" ry="3.4" fill="#0f1c16" transform="rotate(9 57.0 96.3)"/><ellipse cx="39.7" cy="93.2" rx="5.3" ry="5.0" fill="#0f1c16" transform="rotate(-8 39.7 93.2)"/><ellipse cx="161.5" cy="33.8" rx="7.4" ry="5.5" fill="#0f1c16" transform="rotate(26 161.5 33.8)"/><ellipse cx="196.0" cy="29.7" rx="6.3" ry="3.4" fill="#0f1c16" transform="rotate(31 196.0 29.7)"/><ellipse cx="200.1" cy="26.6" rx="4.4" ry="2.9" fill="#0f1c16" transform="rotate(-21 200.1 26.6)"/><ellipse cx="179.3" cy="37.1" rx="5.1" ry="2.0" fill="#0f1c16" transform="rotate(-6 179.3 37.1)"/><ellipse cx="174.2" cy="36.6" rx="10.6" ry="4.8" fill="#0f1c16" transform="rotate(1 174.2 36.6)"/><ellipse cx="185.2" cy="39.2" rx="3.4" ry="5.6" fill="#0f1c16" transform="rotate(22 185.2 39.2)"/><ellipse cx="195.3" cy="72.6" rx="3.8" ry="4.5" fill="#0f1c16" transform="rotate(-35 195.3 72.6)"/><ellipse cx="181.0" cy="68.0" rx="4.3" ry="3.4" fill="#0f1c16" transform="rotate(-36 181.0 68.0)"/><ellipse cx="178.0" cy="66.6" rx="3.8" ry="3.5" fill="#0f1c16" transform="rotate(-38 178.0 66.6)"/><ellipse cx="216.5" cy="77.7" rx="4.2" ry="3.0" fill="#0f1c16" transform="rotate(-12 216.5 77.7)"/><ellipse cx="194.0" cy="65.9" rx="9.8" ry="6.0" fill="#0f1c16" transform="rotate(-3 194.0 65.9)"/><ellipse cx="199.3" cy="65.1" rx="3.8" ry="3.4" fill="#0f1c16" transform="rotate(-19 199.3 65.1)"/><ellipse cx="214.5" cy="66.9" rx="3.2" ry="5.8" fill="#0f1c16" transform="rotate(2 214.5 66.9)"/><ellipse cx="238.4" cy="64.9" rx="9.1" ry="3.2" fill="#0f1c16" transform="rotate(11 238.4 64.9)"/><ellipse cx="212.0" cy="63.3" rx="7.1" ry="5.6" fill="#0f1c16" transform="rotate(-12 212.0 63.3)"/><ellipse cx="217.8" cy="56.0" rx="7.0" ry="4.5" fill="#0f1c16" transform="rotate(9 217.8 56.0)"/><ellipse cx="242.7" cy="61.2" rx="4.6" ry="3.0" fill="#0f1c16" transform="rotate(-8 242.7 61.2)"/><ellipse cx="136.8" cy="119.8" rx="8.8" ry="6.0" fill="#0f1c16" transform="rotate(23 136.8 119.8)"/><ellipse cx="148.8" cy="112.6" rx="7.8" ry="3.4" fill="#0f1c16" transform="rotate(25 148.8 112.6)"/><ellipse cx="159.8" cy="116.4" rx="10.8" ry="2.3" fill="#0f1c16" transform="rotate(-32 159.8 116.4)"/><ellipse cx="148.7" cy="116.1" rx="6.9" ry="5.9" fill="#0f1c16" transform="rotate(9 148.7 116.1)"/><ellipse cx="94.1" cy="143.7" rx="9.4" ry="2.3" fill="#0f1c16" transform="rotate(13 94.1 143.7)"/><ellipse cx="113.0" cy="146.8" rx="9.0" ry="3.9" fill="#0f1c16" transform="rotate(-26 113.0 146.8)"/><ellipse cx="107.7" cy="136.0" rx="9.4" ry="5.9" fill="#0f1c16" transform="rotate(-8 107.7 136.0)"/><ellipse cx="225.7" cy="120.0" rx="4.3" ry="6.0" fill="#0f1c16" transform="rotate(-38 225.7 120.0)"/><ellipse cx="219.0" cy="129.2" rx="8.2" ry="4.4" fill="#0f1c16" transform="rotate(8 219.0 129.2)"/><ellipse cx="213.9" cy="140.5" rx="4.2" ry="4.2" fill="#0f1c16" transform="rotate(-38 213.9 140.5)"/><ellipse cx="228.2" cy="135.4" rx="3.8" ry="5.0" fill="#0f1c16" transform="rotate(-29 228.2 135.4)"/><ellipse cx="236.4" cy="122.7" rx="10.0" ry="2.1" fill="#0f1c16" transform="rotate(-23 236.4 122.7)"/><ellipse cx="215.1" cy="136.3" rx="5.6" ry="4.2" fill="#0f1c16" transform="rotate(27 215.1 136.3)"/><ellipse cx="268.0" cy="96.5" rx="6.7" ry="4.3" fill="#0f1c16" transform="rotate(32 268.0 96.5)"/><ellipse cx="246.5" cy="110.0" rx="7.0" ry="4.1" fill="#0f1c16" transform="rotate(2 246.5 110.0)"/><ellipse cx="228.8" cy="98.6" rx="4.5" ry="2.0" fill="#0f1c16" transform="rotate(24 228.8 98.6)"/><ellipse cx="14.2" cy="152.9" rx="4.0" ry="2.2" fill="#0f1c16" transform="rotate(15 14.2 152.9)"/><ellipse cx="31.4" cy="149.6" rx="9.2" ry="5.5" fill="#0f1c16" transform="rotate(-35 31.4 149.6)"/><ellipse cx="16.4" cy="139.0" rx="3.8" ry="3.8" fill="#0f1c16" transform="rotate(-38 16.4 139.0)"/><ellipse cx="47.3" cy="139.5" rx="5.6" ry="5.9" fill="#0f1c16" transform="rotate(8 47.3 139.5)"/><ellipse cx="183.5" cy="158.9" rx="7.3" ry="3.9" fill="#0f1c16" transform="rotate(35 183.5 158.9)"/><ellipse cx="183.8" cy="169.0" rx="10.5" ry="3.0" fill="#0f1c16" transform="rotate(5 183.8 169.0)"/><ellipse cx="194.5" cy="168.2" rx="4.1" ry="2.5" fill="#0f1c16" transform="rotate(-5 194.5 168.2)"/><ellipse cx="156.2" cy="153.8" rx="3.6" ry="4.7" fill="#0f1c16" transform="rotate(23 156.2 153.8)"/><ellipse cx="149.3" cy="33.4" rx="5.9" ry="3.0" fill="#0f1c16" transform="rotate(-29 149.3 33.4)"/><ellipse cx="128.6" cy="35.9" rx="3.8" ry="5.5" fill="#0f1c16" transform="rotate(-27 128.6 35.9)"/><ellipse cx="137.4" cy="23.4" rx="8.7" ry="6.0" fill="#0f1c16" transform="rotate(-8 137.4 23.4)"/><ellipse cx="126.5" cy="26.6" rx="3.7" ry="3.5" fill="#0f1c16" transform="rotate(-13 126.5 26.6)"/><ellipse cx="57.4" cy="8.4" rx="5.7" ry="4.5" fill="#0f1c16" transform="rotate(1 57.4 8.4)"/><ellipse cx="40.8" cy="31.6" rx="9.3" ry="5.9" fill="#0f1c16" transform="rotate(-32 40.8 31.6)"/><ellipse cx="49.7" cy="9.0" rx="9.2" ry="3.1" fill="#0f1c16" transform="rotate(-30 49.7 9.0)"/><ellipse cx="56.6" cy="29.9" rx="9.6" ry="3.0" fill="#0f1c16" transform="rotate(-28 56.6 29.9)"/><ellipse cx="78.4" cy="21.7" rx="8.6" ry="2.4" fill="#0f1c16" transform="rotate(-35 78.4 21.7)"/><ellipse cx="68.3" cy="18.2" rx="3.6" ry="5.8" fill="#0f1c16" transform="rotate(11 68.3 18.2)"/><ellipse cx="221.7" cy="168.5" rx="3.5" ry="5.5" fill="#0f1c16" transform="rotate(-4 221.7 168.5)"/><ellipse cx="232.9" cy="161.3" rx="10.4" ry="3.1" fill="#0f1c16" transform="rotate(-30 232.9 161.3)"/><ellipse cx="241.2" cy="153.7" rx="3.9" ry="2.6" fill="#0f1c16" transform="rotate(-36 241.2 153.7)"/><ellipse cx="226.9" cy="155.5" rx="5.4" ry="5.0" fill="#0f1c16" transform="rotate(-17 226.9 155.5)"/><ellipse cx="240.0" cy="152.3" rx="5.8" ry="2.1" fill="#0f1c16" transform="rotate(-20 240.0 152.3)"/><ellipse cx="4.0" cy="126.8" rx="12.6" ry="4.1" fill="#4a6238" opacity=".45"/><ellipse cx="124.4" cy="161.7" rx="7.3" ry="7.9" fill="#4a6238" opacity=".45"/><ellipse cx="113.2" cy="85.6" rx="16.0" ry="5.4" fill="#4a6238" opacity=".45"/><ellipse cx="132.8" cy="119.0" rx="17.8" ry="5.1" fill="#4a6238" opacity=".45"/><ellipse cx="218.1" cy="122.3" rx="13.6" ry="5.4" fill="#4a6238" opacity=".45"/><ellipse cx="91.1" cy="9.4" rx="7.6" ry="3.4" fill="#4a6238" opacity=".45"/><ellipse cx="194.1" cy="44.2" rx="8.0" ry="3.5" fill="#4a6238" opacity=".45"/><ellipse cx="220.4" cy="150.6" rx="14.0" ry="4.7" fill="#4a6238" opacity=".45"/><ellipse cx="63.5" cy="50.7" rx="11.5" ry="3.9" fill="#4a6238" opacity=".45"/><ellipse cx="116.8" cy="45.5" rx="17.5" ry="8.8" fill="#4a6238" opacity=".45"/><ellipse cx="143.3" cy="42.3" rx="17.6" ry="4.9" fill="#4a6238" opacity=".45"/><ellipse cx="93.4" cy="0.2" rx="10.6" ry="5.8" fill="#4a6238" opacity=".45"/><ellipse cx="131.7" cy="34.8" rx="12.1" ry="3.0" fill="#4a6238" opacity=".45"/><ellipse cx="69.2" cy="15.5" rx="10.8" ry="3.3" fill="#4a6238" opacity=".45"/><ellipse cx="5.9" cy="52.6" rx="8.8" ry="6.5" fill="#4a6238" opacity=".45"/><ellipse cx="138.6" cy="129.8" rx="13.9" ry="7.3" fill="#4a6238" opacity=".45"/><ellipse cx="230.3" cy="67.4" rx="9.9" ry="8.9" fill="#4a6238" opacity=".45"/><ellipse cx="39.2" cy="125.3" rx="13.7" ry="3.3" fill="#4a6238" opacity=".45"/><ellipse cx="218.8" cy="154.3" rx="13.5" ry="7.4" fill="#4a6238" opacity=".45"/><ellipse cx="212.8" cy="24.1" rx="12.3" ry="6.0" fill="#4a6238" opacity=".45"/><ellipse cx="218.8" cy="139.2" rx="15.9" ry="6.5" fill="#4a6238" opacity=".45"/><ellipse cx="233.9" cy="118.1" rx="14.3" ry="4.4" fill="#4a6238" opacity=".45"/><ellipse cx="8.2" cy="23.0" rx="10.3" ry="3.6" fill="#4a6238" opacity=".45"/><ellipse cx="219.0" cy="96.6" rx="13.5" ry="6.8" fill="#4a6238" opacity=".45"/><ellipse cx="178.3" cy="84.6" rx="6.0" ry="7.8" fill="#4a6238" opacity=".45"/><ellipse cx="196.0" cy="87.0" rx="12.4" ry="7.0" fill="#4a6238" opacity=".45"/><ellipse cx="17.3" cy="127.5" rx="9.0" ry="3.4" fill="#4a6238" opacity=".45"/><ellipse cx="69.6" cy="126.2" rx="8.5" ry="7.4" fill="#4a6238" opacity=".45"/><ellipse cx="255.6" cy="85.5" rx="10.6" ry="5.9" fill="#4a6238" opacity=".45"/><ellipse cx="179.1" cy="132.7" rx="13.4" ry="6.9" fill="#4a6238" opacity=".45"/><ellipse cx="20.3" cy="25.5" rx="9.0" ry="7.5" fill="#4a6238" opacity=".45"/><ellipse cx="79.8" cy="98.2" rx="6.1" ry="3.4" fill="#4a6238" opacity=".45"/><ellipse cx="70.4" cy="116.3" rx="14.3" ry="7.1" fill="#4a6238" opacity=".45"/><ellipse cx="76.2" cy="89.4" rx="11.6" ry="5.8" fill="#4a6238" opacity=".45"/><ellipse cx="31.0" cy="154.6" rx="8.4" ry="8.9" fill="#4a6238" opacity=".45"/><ellipse cx="245.3" cy="3.0" rx="11.5" ry="7.9" fill="#4a6238" opacity=".45"/><ellipse cx="253.6" cy="77.8" rx="9.2" ry="4.3" fill="#4a6238" opacity=".45"/><ellipse cx="247.7" cy="36.5" rx="13.0" ry="3.9" fill="#4a6238" opacity=".45"/><ellipse cx="137.3" cy="164.8" rx="7.6" ry="7.9" fill="#4a6238" opacity=".45"/><ellipse cx="133.3" cy="153.4" rx="14.4" ry="4.4" fill="#4a6238" opacity=".45"/><rect x="1" y="1" width="54" height="15" fill="#cfcfcf" opacity=".85"/><rect x="2" y="17" width="29" height="42" fill="#c8c8c8" opacity=".8"/><path d="M44 164L46 140L52 128L62 118L56 100L70 93L80 102L90 96L108 82L110 68L116 55L112 45L120 42L140 44L170 37L180 32L174 18L166 8" stroke="#4aa6cf" stroke-width="1.2" fill="none"/><path d="M180 36L215 38L236 44L222 66L205 82L195 94L184 100" stroke="#9a3fd0" stroke-width="1.2" fill="none"/><path d="M108 83L126 74L142 75L150 88L138 108L150 123L168 125L190 100" stroke="#c9b23c" stroke-width="1.1" fill="none"/><path d="M62 118L70 98" stroke="#d04848" stroke-width="1.1"/><path d="M166 8L174 18L177 30" stroke="#4ccc3c" stroke-width="1.2" fill="none"/></svg>
<div class="doc" style="left:43.0px;top:224.5px;width:262.0px;height:8.0px;font:normal normal 5.6px/7.0px 'Liberation Sans';color:#333;white-space:nowrap;text-align:justify;text-align-last:justify;">at tincidunt tincidunt. Orci varius natoque penatibus et magnis dis parturient montes, nascetur ridiculus</div>
<div class="doc" style="left:43.0px;top:231.5px;width:262.0px;height:8.0px;font:normal normal 5.6px/7.0px 'Liberation Sans';color:#333;white-space:nowrap;text-align:justify;text-align-last:justify;">mus. Nam sed tincidunt turpis. Quisque tincidunt dictum augue sed egestas. Ut scelerisque leo sit amet</div>
<div class="doc" style="left:43.0px;top:238.5px;width:262.0px;height:8.0px;font:normal normal 5.6px/7.0px 'Liberation Sans';color:#333;white-space:nowrap;text-align:justify;text-align-last:justify;">lectus vehicula, et posuere enim porttitor. Fusce porta varius elit vel consequat. Class aptent taciti</div>
<div class="doc" style="left:43.0px;top:245.5px;width:164.1px;height:8.0px;font:normal normal 5.6px/7.0px 'Liberation Sans';color:#333;white-space:nowrap;">sociosqu ad litora torquent per conubia nostra, per</div>
<div class="doc" style="left:43.0px;top:259.1px;width:262.0px;height:8.0px;font:normal normal 5.6px/7.0px 'Liberation Sans';color:#333;white-space:nowrap;text-align:justify;text-align-last:justify;">inceptos himenaeos. Quisque in ex libero. Nullam augue mauris, blandit sit amet neque eu, viverra</div>
<div class="doc" style="left:43.0px;top:266.1px;width:262.0px;height:8.0px;font:normal normal 5.6px/7.0px 'Liberation Sans';color:#333;white-space:nowrap;text-align:justify;text-align-last:justify;">congue est. Mauris ac auctor dolor. Proin maximus quam id magna vulputate ultricies. Maecenas lacinia</div>
<div class="doc" style="left:43.0px;top:273.1px;width:262.0px;height:8.0px;font:normal normal 5.6px/7.0px 'Liberation Sans';color:#333;white-space:nowrap;text-align:justify;text-align-last:justify;">dolor eros, a bibendum tellus bibendum vitae. Praesent vel neque imperdiet, eleifend est vel, pharetra ex.</div>
<div class="doc" style="left:43.0px;top:280.1px;width:262.0px;height:8.0px;font:normal normal 5.6px/7.0px 'Liberation Sans';color:#333;white-space:nowrap;text-align:justify;text-align-last:justify;">Vivamus a hendrerit nisl. Etiam dignissim sed arcu in cursus. Pellentesque rutrum semper justo, ut ornare</div>
<div class="doc" style="left:43.0px;top:287.1px;width:164.1px;height:8.0px;font:normal normal 5.6px/7.0px 'Liberation Sans';color:#333;white-space:nowrap;">mi vehicula sodales. Fusce ut imperdiet nisl. Nullam</div>
<div class="doc" style="left:43.0px;top:300.7px;width:262.0px;height:8.0px;font:normal normal 5.6px/7.0px 'Liberation Sans';color:#333;white-space:nowrap;text-align:justify;text-align-last:justify;">suscipit, lectus et semper ornare, ante nisi semper lorem, in viverra mauris augue non eros. Nam</div>
<div class="doc" style="left:43.0px;top:307.7px;width:262.0px;height:8.0px;font:normal normal 5.6px/7.0px 'Liberation Sans';color:#333;white-space:nowrap;text-align:justify;text-align-last:justify;">tincidunt mauris mi, nec congue est bibendum vel. Morbi ullamcorper eros at tempus suscipit. Nunc</div>
<div class="doc" style="left:43.0px;top:314.7px;width:262.0px;height:8.0px;font:normal normal 5.6px/7.0px 'Liberation Sans';color:#333;white-space:nowrap;text-align:justify;text-align-last:justify;">mattis sed lectus at eleifend. Morbi convallis augue metus, accumsan malesuada elit consectetur quis.</div>
<div class="doc" style="left:43.0px;top:321.7px;width:262.0px;height:8.0px;font:normal normal 5.6px/7.0px 'Liberation Sans';color:#333;white-space:nowrap;text-align:justify;text-align-last:justify;">Lorem ipsum dolor sit amet, consectetur adipiscing elit. Mauris vitae erat nibh. Morbi imperdiet</div>
<div class="doc" style="left:43.0px;top:328.7px;width:262.0px;height:8.0px;font:normal normal 5.6px/7.0px 'Liberation Sans';color:#333;white-space:nowrap;text-align:justify;text-align-last:justify;">scelerisque massa, non ornare turpis elementum consectetur. Praesent laoreet vitae libero eget pulvinar.</div>
<div class="doc" style="left:43.0px;top:335.7px;width:262.0px;height:8.0px;font:normal normal 5.6px/7.0px 'Liberation Sans';color:#333;white-space:nowrap;text-align:justify;text-align-last:justify;">Fusce malesuada massa at tincidunt tincidunt. Orci varius natoque penatibus et magnis dis parturient</div>
<div class="doc" style="left:43.0px;top:342.7px;width:262.0px;height:8.0px;font:normal normal 5.6px/7.0px 'Liberation Sans';color:#333;white-space:nowrap;text-align:justify;text-align-last:justify;">montes, nascetur ridiculus mus. Nam sed tincidunt turpis. Quisque tincidunt dictum augue sed egestas.</div>
<div class="doc" style="left:43.0px;top:349.7px;width:164.1px;height:8.0px;font:normal normal 5.6px/7.0px 'Liberation Sans';color:#333;white-space:nowrap;">Ut scelerisque leo sit amet lectus vehicula, et</div></div></div>
<div class="tag" style="right:8.5px;top:6px;background:#b3df88;color:#000">Tag 3</div>
<div class="ctitle"><b>Test Correspondent</b>: sample-pdf-with-images</div>
<div class="foot" style="height:192px;padding-top:16px">
<div class="frow"><svg width="27" height="27" viewBox="0 0 16 16"><path d="M1 4.5V2A1 1 0 0 1 2 1H4.5M11.5 1H14A1 1 0 0 1 15 2V4.5M15 11.5V14A1 1 0 0 1 14 15H11.5M4.5 15H2A1 1 0 0 1 1 14V11.5" stroke="#6c757d" stroke-width="0.9" fill="none"/><path d="M3.8 4V12M5.5 4V12M7.2 4V12M9 4V12M11.8 4V12" stroke="#6c757d" stroke-width="0.8"/><rect x="10" y="4" width="1.2" height="8" fill="#6c757d"/></svg><span>#112412322</span></div>
<div class="frow"><svg width="27" height="27" viewBox="0 0 16 16"><rect x="0.8" y="1.5" width="14.4" height="13.7" rx="1.2" stroke="#6c757d" stroke-width="0.9" fill="none"/><path d="M0.8 2.7A1.2 1.2 0 0 1 2 1.5H14A1.2 1.2 0 0 1 15.2 2.7V4H0.8Z" fill="#6c757d"/><rect x="11" y="6" width="1.6" height="1.6" fill="#6c757d"/><path d="M3.5 0.5V2M12.5 0.5V2" stroke="#6c757d" stroke-width="1"/></svg><span>Jan 20, 2021</span></div>
<div class="bg3" style="bottom:16px"><div><svg width="30" height="30" viewBox="0 0 16 16"><path d="M11.5 1.5L14.5 4.5L5 14L1 15L2 11Z" stroke="#6c757d" stroke-width="0.9" fill="none" stroke-linejoin="round"/><path d="M10 3L13 6M2 11L5 14" stroke="#6c757d" stroke-width="0.9"/><path d="M1 15L1.6 12.6L3.4 14.4Z" fill="#6c757d"/></svg></div><div><svg width="32" height="32" viewBox="0 0 16 16"><path d="M0.8 8C2.5 5 5 3.2 8 3.2S13.5 5 15.2 8C13.5 11 11 12.8 8 12.8S2.5 11 0.8 8Z" stroke="#6c757d" stroke-width="0.9" fill="none"/><circle cx="8" cy="8" r="2.6" stroke="#6c757d" stroke-width="0.9" fill="none"/></svg></div><div><svg width="30" height="30" viewBox="0 0 16 16"><path d="M1 9.5V13.5A1 1 0 0 0 2 14.5H14A1 1 0 0 0 15 13.5V9.5M8 1.5V11M4.8 7.8L8 11L11.2 7.8" stroke="#6c757d" stroke-width="0.9" fill="none"/></svg></div></div>
</div>
</div>
<div class="card" style="left:1735.7px;top:1255.7px;height:655px">
<div class="thumb"><div class="tin"><div class="doc" style="left:43.0px;top:45.0px;width:262.0px;height:8.0px;font:normal normal 5.6px/7.0px 'Liberation Sans';color:#333;white-space:nowrap;text-align:justify;text-align-last:justify;">Lorem ipsum dolor sit amet, consectetur adipiscing elit. Mauris vitae erat nibh. Morbi imperdiet</div>
<div class="doc" style="left:43.0px;top:52.0px;width:262.0px;height:8.0px;font:normal normal 5.6px/7.0px 'Liberation Sans';color:#333;white-space:nowrap;text-align:justify;text-align-last:justify;">scelerisque massa, non ornare turpis elementum consectetur. Praesent laoreet vitae libero eget pulvinar.</div>
<div class="doc" style="left:43.0px;top:59.0px;width:262.0px;height:8.0px;font:normal normal 5.6px/7.0px 'Liberation Sans';color:#333;white-space:nowrap;text-align:justify;text-align-last:justify;">Fusce malesuada massa at tincidunt tincidunt. Orci varius natoque penatibus et magnis dis parturient</div>
<div class="doc" style="left:43.0px;top:66.0px;width:164.1px;height:8.0px;font:normal normal 5.6px/7.0px 'Liberation Sans';color:#333;white-space:nowrap;">montes, nascetur ridiculus mus. Nam sed tincidunt</div>
<div class="doc" style="left:43.0px;top:79.5px;width:262.0px;height:8.0px;font:normal normal 5.6px/7.0px 'Liberation Sans';color:#333;white-space:nowrap;text-align:justify;text-align-last:justify;">turpis. Quisque tincidunt dictum augue sed egestas. Ut scelerisque leo sit amet lectus vehicula, et</div>
<div class="doc" style="left:43.0px;top:86.5px;width:262.0px;height:8.0px;font:normal normal 5.6px/7.0px 'Liberation Sans';color:#333;white-space:nowrap;text-align:justify;text-align-last:justify;">posuere enim porttitor. Fusce porta varius elit vel consequat. Class aptent taciti sociosqu ad litora</div>
<div class="doc" style="left:43.0px;top:93.5px;width:262.0px;height:8.0px;font:normal normal 5.6px/7.0px 'Liberation Sans';color:#333;white-space:nowrap;text-align:justify;text-align-last:justify;">torquent per conubia nostra, per inceptos himenaeos. Quisque in ex libero. Nullam augue mauris, blandit</div>
<div class="doc" style="left:43.0px;top:100.5px;width:262.0px;height:8.0px;font:normal normal 5.6px/7.0px 'Liberation Sans';color:#333;white-space:nowrap;text-align:justify;text-align-last:justify;">sit amet neque eu, viverra congue est. Mauris ac auctor dolor. Proin maximus quam id magna vulputate</div>
<div class="doc" style="left:43.0px;top:107.5px;width:262.0px;height:8.0px;font:normal normal 5.6px/7.0px 'Liberation Sans';color:#333;white-space:nowrap;text-align:justify;text-align-last:justify;">ultricies. Maecenas lacinia dolor eros, a bibendum tellus bibendum vitae. Praesent vel neque imperdiet,</div>
<div class="doc" style="left:43.0px;top:114.5px;width:262.0px;height:8.0px;font:normal normal 5.6px/7.0px 'Liberation Sans';color:#333;white-space:nowrap;text-align:justify;text-align-last:justify;">eleifend est vel, pharetra ex. Vivamus a hendrerit nisl. Etiam dignissim sed arcu in cursus. Pellentesque</div>
<div class="doc" style="left:43.0px;top:121.5px;width:164.1px;height:8.0px;font:normal normal 5.6px/7.0px 'Liberation Sans';color:#333;white-space:nowrap;">rutrum semper justo, ut ornare mi vehicula sodales.</div>
<div class="doc" style="left:43.0px;top:135.0px;width:262.0px;height:8.0px;font:normal normal 5.6px/7.0px 'Liberation Sans';color:#333;white-space:nowrap;text-align:justify;text-align-last:justify;">Fusce ut imperdiet nisl. Nullam suscipit, lectus et semper ornare, ante nisi semper lorem, in viverra</div>
<div class="doc" style="left:43.0px;top:142.0px;width:262.0px;height:8.0px;font:normal normal 5.6px/7.0px 'Liberation Sans';color:#333;white-space:nowrap;text-align:justify;text-align-last:justify;">mauris augue non eros. Nam tincidunt mauris mi, nec congue est bibendum vel. Morbi ullamcorper eros</div>
<div class="doc" style="left:43.0px;top:149.0px;width:262.0px;height:8.0px;font:normal normal 5.6px/7.0px 'Liberation Sans';color:#333;white-space:nowrap;text-align:justify;text-align-last:justify;">at tempus suscipit. Nunc mattis sed lectus at eleifend. Morbi convallis augue metus, accumsan</div>
<div class="doc" style="left:43.0px;top:156.0px;width:262.0px;height:8.0px;font:normal normal 5.6px/7.0px 'Liberation Sans';color:#333;white-space:nowrap;text-align:justify;text-align-last:justify;">malesuada elit consectetur quis. Lorem ipsum dolor sit amet, consectetur adipiscing elit. Mauris vitae erat</div>
<div class="doc" style="left:43.0px;top:163.0px;width:262.0px;height:8.0px;font:normal normal 5.6px/7.0px 'Liberation Sans';color:#333;white-space:nowrap;text-align:justify;text-align-last:justify;">nibh. Morbi imperdiet scelerisque massa, non ornare turpis elementum consectetur. Praesent laoreet</div>
<div class="doc" style="left:43.0px;top:170.0px;width:164.1px;height:8.0px;font:normal normal 5.6px/7.0px 'Liberation Sans';color:#333;white-space:nowrap;">vitae libero eget pulvinar. Fusce malesuada massa at</div>
<div class="doc" style="left:43.0px;top:183.5px;width:262.0px;height:8.0px;font:normal normal 5.6px/7.0px 'Liberation Sans';color:#333;white-space:nowrap;text-align:justify;text-align-last:justify;">tincidunt tincidunt. Orci varius natoque penatibus et magnis dis parturient montes, nascetur ridiculus mus.</div>
<div class="doc" style="left:43.0px;top:190.5px;width:262.0px;height:8.0px;font:normal normal 5.6px/7.0px 'Liberation Sans';color:#333;white-space:nowrap;text-align:justify;text-align-last:justify;">Nam sed tincidunt turpis. Quisque tincidunt dictum augue sed egestas. Ut scelerisque leo sit amet lectus</div>
<div class="doc" style="left:43.0px;top:197.5px;width:262.0px;height:8.0px;font:normal normal 5.6px/7.0px 'Liberation Sans';color:#333;white-space:nowrap;text-align:justify;text-align-last:justify;">vehicula, et posuere enim porttitor. Fusce porta varius elit vel consequat. Class aptent taciti sociosqu ad</div>
<div class="doc" style="left:43.0px;top:204.5px;width:164.1px;height:8.0px;font:normal normal 5.6px/7.0px 'Liberation Sans';color:#333;white-space:nowrap;">litora torquent per conubia nostra, per inceptos</div>
<div class="doc" style="left:43.0px;top:218.0px;width:262.0px;height:8.0px;font:normal normal 5.6px/7.0px 'Liberation Sans';color:#333;white-space:nowrap;text-align:justify;text-align-last:justify;">himenaeos. Quisque in ex libero. Nullam augue mauris, blandit sit amet neque eu, viverra congue est.</div>
<div class="doc" style="left:43.0px;top:225.0px;width:262.0px;height:8.0px;font:normal normal 5.6px/7.0px 'Liberation Sans';color:#333;white-space:nowrap;text-align:justify;text-align-last:justify;">Mauris ac auctor dolor. Proin maximus quam id magna vulputate ultricies. Maecenas lacinia dolor eros,</div>
<div class="doc" style="left:43.0px;top:232.0px;width:262.0px;height:8.0px;font:normal normal 5.6px/7.0px 'Liberation Sans';color:#333;white-space:nowrap;text-align:justify;text-align-last:justify;">a bibendum tellus bibendum vitae. Praesent vel neque imperdiet, eleifend est vel, pharetra ex. Vivamus</div>
<div class="doc" style="left:43.0px;top:239.0px;width:164.1px;height:8.0px;font:normal normal 5.6px/7.0px 'Liberation Sans';color:#333;white-space:nowrap;">a hendrerit nisl. Etiam dignissim sed arcu in cursus.</div>
<div class="doc" style="left:43.0px;top:252.5px;width:262.0px;height:8.0px;font:normal normal 5.6px/7.0px 'Liberation Sans';color:#333;white-space:nowrap;text-align:justify;text-align-last:justify;">Pellentesque rutrum semper justo, ut ornare mi vehicula sodales. Fusce ut imperdiet nisl. Nullam suscipit,</div>
<div class="doc" style="left:43.0px;top:259.5px;width:262.0px;height:8.0px;font:normal normal 5.6px/7.0px 'Liberation Sans';color:#333;white-space:nowrap;text-align:justify;text-align-last:justify;">lectus et semper ornare, ante nisi semper lorem, in viverra mauris augue non eros. Nam tincidunt mauris</div>
<div class="doc" style="left:43.0px;top:266.5px;width:262.0px;height:8.0px;font:normal normal 5.6px/7.0px 'Liberation Sans';color:#333;white-space:nowrap;text-align:justify;text-align-last:justify;">mi, nec congue est bibendum vel. Morbi ullamcorper eros at tempus suscipit. Nunc mattis sed lectus at</div>
<div class="doc" style="left:43.0px;top:273.5px;width:164.1px;height:8.0px;font:normal normal 5.6px/7.0px 'Liberation Sans';color:#333;white-space:nowrap;">eleifend. Morbi convallis augue metus, accumsan</div>
<div class="doc" style="left:43.0px;top:287.0px;width:262.0px;height:8.0px;font:normal normal 5.6px/7.0px 'Liberation Sans';color:#333;white-space:nowrap;text-align:justify;text-align-last:justify;">malesuada elit consectetur quis. Lorem ipsum dolor sit amet, consectetur adipiscing elit. Mauris vitae erat</div>
<div class="doc" style="left:43.0px;top:294.0px;width:262.0px;height:8.0px;font:normal normal 5.6px/7.0px 'Liberation Sans';color:#333;white-space:nowrap;text-align:justify;text-align-last:justify;">nibh. Morbi imperdiet scelerisque massa, non ornare turpis elementum consectetur. Praesent laoreet</div>
<div class="doc" style="left:43.0px;top:301.0px;width:262.0px;height:8.0px;font:normal normal 5.6px/7.0px 'Liberation Sans';color:#333;white-space:nowrap;text-align:justify;text-align-last:justify;">vitae libero eget pulvinar. Fusce malesuada massa at tincidunt tincidunt. Orci varius natoque penatibus</div>
<div class="doc" style="left:43.0px;top:308.0px;width:164.1px;height:8.0px;font:normal normal 5.6px/7.0px 'Liberation Sans';color:#333;white-space:nowrap;">et magnis dis parturient montes, nascetur ridiculus</div>
<div class="doc" style="left:43.0px;top:321.5px;width:262.0px;height:8.0px;font:normal normal 5.6px/7.0px 'Liberation Sans';color:#333;white-space:nowrap;text-align:justify;text-align-last:justify;">mus. Nam sed tincidunt turpis. Quisque tincidunt dictum augue sed egestas. Ut scelerisque leo sit amet</div>
<div class="doc" style="left:43.0px;top:328.5px;width:262.0px;height:8.0px;font:normal normal 5.6px/7.0px 'Liberation Sans';color:#333;white-space:nowrap;text-align:justify;text-align-last:justify;">lectus vehicula, et posuere enim porttitor. Fusce porta varius elit vel consequat. Class aptent taciti</div>
<div class="doc" style="left:43.0px;top:335.5px;width:262.0px;height:8.0px;font:normal normal 5.6px/7.0px 'Liberation Sans';color:#333;white-space:nowrap;text-align:justify;text-align-last:justify;">sociosqu ad litora torquent per conubia nostra, per inceptos himenaeos. Quisque in ex libero. Nullam</div>
<div class="doc" style="left:43.0px;top:342.5px;width:262.0px;height:8.0px;font:normal normal 5.6px/7.0px 'Liberation Sans';color:#333;white-space:nowrap;text-align:justify;text-align-last:justify;">augue mauris, blandit sit amet neque eu, viverra congue est. Mauris ac auctor dolor. Proin maximus</div>
<div class="doc" style="left:43.0px;top:349.5px;width:164.1px;height:8.0px;font:normal normal 5.6px/7.0px 'Liberation Sans';color:#333;white-space:nowrap;">quam id magna vulputate ultricies. Maecenas lacinia</div></div></div>
<div class="ctitle">sample-pdf-download-10-mb copy_red</div>
<div class="foot" style="height:145px;padding-top:16px">
<div class="frow"><svg width="27" height="27" viewBox="0 0 16 16"><rect x="0.8" y="1.5" width="14.4" height="13.7" rx="1.2" stroke="#6c757d" stroke-width="0.9" fill="none"/><path d="M0.8 2.7A1.2 1.2 0 0 1 2 1.5H14A1.2 1.2 0 0 1 15.2 2.7V4H0.8Z" fill="#6c757d"/><rect x="11" y="6" width="1.6" height="1.6" fill="#6c757d"/><path d="M3.5 0.5V2M12.5 0.5V2" stroke="#6c757d" stroke-width="1"/></svg><span>Jan 26, 2021</span></div>
<div class="bg3" style="bottom:16px"><div><svg width="30" height="30" viewBox="0 0 16 16"><path d="M11.5 1.5L14.5 4.5L5 14L1 15L2 11Z" stroke="#6c757d" stroke-width="0.9" fill="none" stroke-linejoin="round"/><path d="M10 3L13 6M2 11L5 14" stroke="#6c757d" stroke-width="0.9"/><path d="M1 15L1.6 12.6L3.4 14.4Z" fill="#6c757d"/></svg></div><div><svg width="32" height="32" viewBox="0 0 16 16"><path d="M0.8 8C2.5 5 5 3.2 8 3.2S13.5 5 15.2 8C13.5 11 11 12.8 8 12.8S2.5 11 0.8 8Z" stroke="#6c757d" stroke-width="0.9" fill="none"/><circle cx="8" cy="8" r="2.6" stroke="#6c757d" stroke-width="0.9" fill="none"/></svg></div><div><svg width="30" height="30" viewBox="0 0 16 16"><path d="M1 9.5V13.5A1 1 0 0 0 2 14.5H14A1 1 0 0 0 15 13.5V9.5M8 1.5V11M4.8 7.8L8 11L11.2 7.8" stroke="#6c757d" stroke-width="0.9" fill="none"/></svg></div></div>
</div>
</div>
<div class="card" style="left:2116.3px;top:1255.7px;height:655px">
<div class="thumb"><div class="tin"><div class="doc" style="left:43.0px;top:45.0px;width:262.0px;height:8.0px;font:normal normal 5.6px/7.0px 'Liberation Sans';color:#333;white-space:nowrap;text-align:justify;text-align-last:justify;">Lorem ipsum dolor sit amet, consectetur adipiscing elit. Mauris vitae erat nibh. Morbi imperdiet</div>
<div class="doc" style="left:43.0px;top:52.0px;width:262.0px;height:8.0px;font:normal normal 5.6px/7.0px 'Liberation Sans';color:#333;white-space:nowrap;text-align:justify;text-align-last:justify;">scelerisque massa, non ornare turpis elementum consectetur. Praesent laoreet vitae libero eget pulvinar.</div>
<div class="doc" style="left:43.0px;top:59.0px;width:262.0px;height:8.0px;font:normal normal 5.6px/7.0px 'Liberation Sans';color:#333;white-space:nowrap;text-align:justify;text-align-last:justify;">Fusce malesuada massa at tincidunt tincidunt. Orci varius natoque penatibus et magnis dis parturient</div>
<div class="doc" style="left:43.0px;top:66.0px;width:164.1px;height:8.0px;font:normal normal 5.6px/7.0px 'Liberation Sans';color:#333;white-space:nowrap;">montes, nascetur ridiculus mus. Nam sed tincidunt</div>
<div class="doc" style="left:43.0px;top:79.5px;width:262.0px;height:8.0px;font:normal normal 5.6px/7.0px 'Liberation Sans';color:#333;white-space:nowrap;text-align:justify;text-align-last:justify;">turpis. Quisque tincidunt dictum augue sed egestas. Ut scelerisque leo sit amet lectus vehicula, et</div>
<div class="doc" style="left:43.0px;top:86.5px;width:262.0px;height:8.0px;font:normal normal 5.6px/7.0px 'Liberation Sans';color:#333;white-space:nowrap;text-align:justify;text-align-last:justify;">posuere enim porttitor. Fusce porta varius elit vel consequat. Class aptent taciti sociosqu ad litora</div>
<div class="doc" style="left:43.0px;top:93.5px;width:262.0px;height:8.0px;font:normal normal 5.6px/7.0px 'Liberation Sans';color:#333;white-space:nowrap;text-align:justify;text-align-last:justify;">torquent per conubia nostra, per inceptos himenaeos. Quisque in ex libero. Nullam augue mauris, blandit</div>
<div class="doc" style="left:43.0px;top:100.5px;width:262.0px;height:8.0px;font:normal normal 5.6px/7.0px 'Liberation Sans';color:#333;white-space:nowrap;text-align:justify;text-align-last:justify;">sit amet neque eu, viverra congue est. Mauris ac auctor dolor. Proin maximus quam id magna vulputate</div>
<div class="doc" style="left:43.0px;top:107.5px;width:262.0px;height:8.0px;font:normal normal 5.6px/7.0px 'Liberation Sans';color:#333;white-space:nowrap;text-align:justify;text-align-last:justify;">ultricies. Maecenas lacinia dolor eros, a bibendum tellus bibendum vitae. Praesent vel neque imperdiet,</div>
<div class="doc" style="left:43.0px;top:114.5px;width:262.0px;height:8.0px;font:normal normal 5.6px/7.0px 'Liberation Sans';color:#333;white-space:nowrap;text-align:justify;text-align-last:justify;">eleifend est vel, pharetra ex. Vivamus a hendrerit nisl. Etiam dignissim sed arcu in cursus. Pellentesque</div>
<div class="doc" style="left:43.0px;top:121.5px;width:164.1px;height:8.0px;font:normal normal 5.6px/7.0px 'Liberation Sans';color:#333;white-space:nowrap;">rutrum semper justo, ut ornare mi vehicula sodales.</div>
<div class="doc" style="left:43.0px;top:135.0px;width:262.0px;height:8.0px;font:normal normal 5.6px/7.0px 'Liberation Sans';color:#333;white-space:nowrap;text-align:justify;text-align-last:justify;">Fusce ut imperdiet nisl. Nullam suscipit, lectus et semper ornare, ante nisi semper lorem, in viverra</div>
<div class="doc" style="left:43.0px;top:142.0px;width:262.0px;height:8.0px;font:normal normal 5.6px/7.0px 'Liberation Sans';color:#333;white-space:nowrap;text-align:justify;text-align-last:justify;">mauris augue non eros. Nam tincidunt mauris mi, nec congue est bibendum vel. Morbi ullamcorper eros</div>
<div class="doc" style="left:43.0px;top:149.0px;width:262.0px;height:8.0px;font:normal normal 5.6px/7.0px 'Liberation Sans';color:#333;white-space:nowrap;text-align:justify;text-align-last:justify;">at tempus suscipit. Nunc mattis sed lectus at eleifend. Morbi convallis augue metus, accumsan</div>
<div class="doc" style="left:43.0px;top:156.0px;width:262.0px;height:8.0px;font:normal normal 5.6px/7.0px 'Liberation Sans';color:#333;white-space:nowrap;text-align:justify;text-align-last:justify;">malesuada elit consectetur quis. Lorem ipsum dolor sit amet, consectetur adipiscing elit. Mauris vitae erat</div>
<div class="doc" style="left:43.0px;top:163.0px;width:262.0px;height:8.0px;font:normal normal 5.6px/7.0px 'Liberation Sans';color:#333;white-space:nowrap;text-align:justify;text-align-last:justify;">nibh. Morbi imperdiet scelerisque massa, non ornare turpis elementum consectetur. Praesent laoreet</div>
<div class="doc" style="left:43.0px;top:170.0px;width:164.1px;height:8.0px;font:normal normal 5.6px/7.0px 'Liberation Sans';color:#333;white-space:nowrap;">vitae libero eget pulvinar. Fusce malesuada massa at</div>
<div class="doc" style="left:43.0px;top:183.5px;width:262.0px;height:8.0px;font:normal normal 5.6px/7.0px 'Liberation Sans';color:#333;white-space:nowrap;text-align:justify;text-align-last:justify;">tincidunt tincidunt. Orci varius natoque penatibus et magnis dis parturient montes, nascetur ridiculus mus.</div>
<div class="doc" style="left:43.0px;top:190.5px;width:262.0px;height:8.0px;font:normal normal 5.6px/7.0px 'Liberation Sans';color:#333;white-space:nowrap;text-align:justify;text-align-last:justify;">Nam sed tincidunt turpis. Quisque tincidunt dictum augue sed egestas. Ut scelerisque leo sit amet lectus</div>
<div class="doc" style="left:43.0px;top:197.5px;width:262.0px;height:8.0px;font:normal normal 5.6px/7.0px 'Liberation Sans';color:#333;white-space:nowrap;text-align:justify;text-align-last:justify;">vehicula, et posuere enim porttitor. Fusce porta varius elit vel consequat. Class aptent taciti sociosqu ad</div>
<div class="doc" style="left:43.0px;top:204.5px;width:164.1px;height:8.0px;font:normal normal 5.6px/7.0px 'Liberation Sans';color:#333;white-space:nowrap;">litora torquent per conubia nostra, per inceptos</div>
<div class="doc" style="left:43.0px;top:218.0px;width:262.0px;height:8.0px;font:normal normal 5.6px/7.0px 'Liberation Sans';color:#333;white-space:nowrap;text-align:justify;text-align-last:justify;">himenaeos. Quisque in ex libero. Nullam augue mauris, blandit sit amet neque eu, viverra congue est.</div>
<div class="doc" style="left:43.0px;top:225.0px;width:262.0px;height:8.0px;font:normal normal 5.6px/7.0px 'Liberation Sans';color:#333;white-space:nowrap;text-align:justify;text-align-last:justify;">Mauris ac auctor dolor. Proin maximus quam id magna vulputate ultricies. Maecenas lacinia dolor eros,</div>
<div class="doc" style="left:43.0px;top:232.0px;width:262.0px;height:8.0px;font:normal normal 5.6px/7.0px 'Liberation Sans';color:#333;white-space:nowrap;text-align:justify;text-align-last:justify;">a bibendum tellus bibendum vitae. Praesent vel neque imperdiet, eleifend est vel, pharetra ex. Vivamus</div>
<div class="doc" style="left:43.0px;top:239.0px;width:164.1px;height:8.0px;font:normal normal 5.6px/7.0px 'Liberation Sans';color:#333;white-space:nowrap;">a hendrerit nisl. Etiam dignissim sed arcu in cursus.</div>
<div class="doc" style="left:43.0px;top:252.5px;width:262.0px;height:8.0px;font:normal normal 5.6px/7.0px 'Liberation Sans';color:#333;white-space:nowrap;text-align:justify;text-align-last:justify;">Pellentesque rutrum semper justo, ut ornare mi vehicula sodales. Fusce ut imperdiet nisl. Nullam suscipit,</div>
<div class="doc" style="left:43.0px;top:259.5px;width:262.0px;height:8.0px;font:normal normal 5.6px/7.0px 'Liberation Sans';color:#333;white-space:nowrap;text-align:justify;text-align-last:justify;">lectus et semper ornare, ante nisi semper lorem, in viverra mauris augue non eros. Nam tincidunt mauris</div>
<div class="doc" style="left:43.0px;top:266.5px;width:262.0px;height:8.0px;font:normal normal 5.6px/7.0px 'Liberation Sans';color:#333;white-space:nowrap;text-align:justify;text-align-last:justify;">mi, nec congue est bibendum vel. Morbi ullamcorper eros at tempus suscipit. Nunc mattis sed lectus at</div>
<div class="doc" style="left:43.0px;top:273.5px;width:164.1px;height:8.0px;font:normal normal 5.6px/7.0px 'Liberation Sans';color:#333;white-space:nowrap;">eleifend. Morbi convallis augue metus, accumsan</div>
<div class="doc" style="left:43.0px;top:287.0px;width:262.0px;height:8.0px;font:normal normal 5.6px/7.0px 'Liberation Sans';color:#333;white-space:nowrap;text-align:justify;text-align-last:justify;">malesuada elit consectetur quis. Lorem ipsum dolor sit amet, consectetur adipiscing elit. Mauris vitae erat</div>
<div class="doc" style="left:43.0px;top:294.0px;width:262.0px;height:8.0px;font:normal normal 5.6px/7.0px 'Liberation Sans';color:#333;white-space:nowrap;text-align:justify;text-align-last:justify;">nibh. Morbi imperdiet scelerisque massa, non ornare turpis elementum consectetur. Praesent laoreet</div>
<div class="doc" style="left:43.0px;top:301.0px;width:262.0px;height:8.0px;font:normal normal 5.6px/7.0px 'Liberation Sans';color:#333;white-space:nowrap;text-align:justify;text-align-last:justify;">vitae libero eget pulvinar. Fusce malesuada massa at tincidunt tincidunt. Orci varius natoque penatibus</div>
<div class="doc" style="left:43.0px;top:308.0px;width:164.1px;height:8.0px;font:normal normal 5.6px/7.0px 'Liberation Sans';color:#333;white-space:nowrap;">et magnis dis parturient montes, nascetur ridiculus</div>
<div class="doc" style="left:43.0px;top:321.5px;width:262.0px;height:8.0px;font:normal normal 5.6px/7.0px 'Liberation Sans';color:#333;white-space:nowrap;text-align:justify;text-align-last:justify;">mus. Nam sed tincidunt turpis. Quisque tincidunt dictum augue sed egestas. Ut scelerisque leo sit amet</div>
<div class="doc" style="left:43.0px;top:328.5px;width:262.0px;height:8.0px;font:normal normal 5.6px/7.0px 'Liberation Sans';color:#333;white-space:nowrap;text-align:justify;text-align-last:justify;">lectus vehicula, et posuere enim porttitor. Fusce porta varius elit vel consequat. Class aptent taciti</div>
<div class="doc" style="left:43.0px;top:335.5px;width:262.0px;height:8.0px;font:normal normal 5.6px/7.0px 'Liberation Sans';color:#333;white-space:nowrap;text-align:justify;text-align-last:justify;">sociosqu ad litora torquent per conubia nostra, per inceptos himenaeos. Quisque in ex libero. Nullam</div>
<div class="doc" style="left:43.0px;top:342.5px;width:262.0px;height:8.0px;font:normal normal 5.6px/7.0px 'Liberation Sans';color:#333;white-space:nowrap;text-align:justify;text-align-last:justify;">augue mauris, blandit sit amet neque eu, viverra congue est. Mauris ac auctor dolor. Proin maximus</div>
<div class="doc" style="left:43.0px;top:349.5px;width:164.1px;height:8.0px;font:normal normal 5.6px/7.0px 'Liberation Sans';color:#333;white-space:nowrap;">quam id magna vulputate ultricies. Maecenas lacinia</div></div></div>
<div class="tag" style="right:8.5px;top:6px;background:#3d2cb5;color:#fff">TagWithPartial</div>
<div class="ctitle">sample-pdf-download-10-mb-longer-title</div>
<div class="foot" style="height:192px;padding-top:16px">
<div class="frow"><svg width="27" height="27" viewBox="0 0 16 16"><path d="M1 4.5V2A1 1 0 0 1 2 1H4.5M11.5 1H14A1 1 0 0 1 15 2V4.5M15 11.5V14A1 1 0 0 1 14 15H11.5M4.5 15H2A1 1 0 0 1 1 14V11.5" stroke="#6c757d" stroke-width="0.9" fill="none"/><path d="M3.8 4V12M5.5 4V12M7.2 4V12M9 4V12M11.8 4V12" stroke="#6c757d" stroke-width="0.8"/><rect x="10" y="4" width="1.2" height="8" fill="#6c757d"/></svg><span>#112412324</span></div>
<div class="frow"><svg width="27" height="27" viewBox="0 0 16 16"><rect x="0.8" y="1.5" width="14.4" height="13.7" rx="1.2" stroke="#6c757d" stroke-width="0.9" fill="none"/><path d="M0.8 2.7A1.2 1.2 0 0 1 2 1.5H14A1.2 1.2 0 0 1 15.2 2.7V4H0.8Z" fill="#6c757d"/><rect x="11" y="6" width="1.6" height="1.6" fill="#6c757d"/><path d="M3.5 0.5V2M12.5 0.5V2" stroke="#6c757d" stroke-width="1"/></svg><span>Jan 26, 2021</span></div>
<div class="bg3" style="bottom:16px"><div><svg width="30" height="30" viewBox="0 0 16 16"><path d="M11.5 1.5L14.5 4.5L5 14L1 15L2 11Z" stroke="#6c757d" stroke-width="0.9" fill="none" stroke-linejoin="round"/><path d="M10 3L13 6M2 11L5 14" stroke="#6c757d" stroke-width="0.9"/><path d="M1 15L1.6 12.6L3.4 14.4Z" fill="#6c757d"/></svg></div><div><svg width="32" height="32" viewBox="0 0 16 16"><path d="M0.8 8C2.5 5 5 3.2 8 3.2S13.5 5 15.2 8C13.5 11 11 12.8 8 12.8S2.5 11 0.8 8Z" stroke="#6c757d" stroke-width="0.9" fill="none"/><circle cx="8" cy="8" r="2.6" stroke="#6c757d" stroke-width="0.9" fill="none"/></svg></div><div><svg width="30" height="30" viewBox="0 0 16 16"><path d="M1 9.5V13.5A1 1 0 0 0 2 14.5H14A1 1 0 0 0 15 13.5V9.5M8 1.5V11M4.8 7.8L8 11L11.2 7.8" stroke="#6c757d" stroke-width="0.9" fill="none"/></svg></div></div>
</div>
</div>
<div class="card" style="left:2496.8px;top:1255.7px;height:655px">
<div class="thumb"><div class="tin"><div class="doc" style="left:43.0px;top:45.0px;width:262.0px;height:8.0px;font:normal normal 5.6px/7.0px 'Liberation Sans';color:#333;white-space:nowrap;text-align:justify;text-align-last:justify;">Lorem ipsum dolor sit amet, consectetur adipiscing elit. Mauris vitae erat nibh. Morbi imperdiet</div>
<div class="doc" style="left:43.0px;top:52.0px;width:262.0px;height:8.0px;font:normal normal 5.6px/7.0px 'Liberation Sans';color:#333;white-space:nowrap;text-align:justify;text-align-last:justify;">scelerisque massa, non ornare turpis elementum consectetur. Praesent laoreet vitae libero eget pulvinar.</div>
<div class="doc" style="left:43.0px;top:59.0px;width:262.0px;height:8.0px;font:normal normal 5.6px/7.0px 'Liberation Sans';color:#333;white-space:nowrap;text-align:justify;text-align-last:justify;">Fusce malesuada massa at tincidunt tincidunt. Orci varius natoque penatibus et magnis dis parturient</div>
<div class="doc" style="left:43.0px;top:66.0px;width:164.1px;height:8.0px;font:normal normal 5.6px/7.0px 'Liberation Sans';color:#333;white-space:nowrap;">montes, nascetur ridiculus mus. Nam sed tincidunt</div>
<div class="doc" style="left:43.0px;top:79.5px;width:262.0px;height:8.0px;font:normal normal 5.6px/7.0px 'Liberation Sans';color:#333;white-space:nowrap;text-align:justify;text-align-last:justify;">turpis. Quisque tincidunt dictum augue sed egestas. Ut scelerisque leo sit amet lectus vehicula, et</div>
<div class="doc" style="left:43.0px;top:86.5px;width:262.0px;height:8.0px;font:normal normal 5.6px/7.0px 'Liberation Sans';color:#333;white-space:nowrap;text-align:justify;text-align-last:justify;">posuere enim porttitor. Fusce porta varius elit vel consequat. Class aptent taciti sociosqu ad litora</div>
<div class="doc" style="left:43.0px;top:93.5px;width:262.0px;height:8.0px;font:normal normal 5.6px/7.0px 'Liberation Sans';color:#333;white-space:nowrap;text-align:justify;text-align-last:justify;">torquent per conubia nostra, per inceptos himenaeos. Quisque in ex libero. Nullam augue mauris, blandit</div>
<div class="doc" style="left:43.0px;top:100.5px;width:262.0px;height:8.0px;font:normal normal 5.6px/7.0px 'Liberation Sans';color:#333;white-space:nowrap;text-align:justify;text-align-last:justify;">sit amet neque eu, viverra congue est. Mauris ac auctor dolor. Proin maximus quam id magna vulputate</div>
<div class="doc" style="left:43.0px;top:107.5px;width:262.0px;height:8.0px;font:normal normal 5.6px/7.0px 'Liberation Sans';color:#333;white-space:nowrap;text-align:justify;text-align-last:justify;">ultricies. Maecenas lacinia dolor eros, a bibendum tellus bibendum vitae. Praesent vel neque imperdiet,</div>
<div class="doc" style="left:43.0px;top:114.5px;width:262.0px;height:8.0px;font:normal normal 5.6px/7.0px 'Liberation Sans';color:#333;white-space:nowrap;text-align:justify;text-align-last:justify;">eleifend est vel, pharetra ex. Vivamus a hendrerit nisl. Etiam dignissim sed arcu in cursus. Pellentesque</div>
<div class="doc" style="left:43.0px;top:121.5px;width:164.1px;height:8.0px;font:normal normal 5.6px/7.0px 'Liberation Sans';color:#333;white-space:nowrap;">rutrum semper justo, ut ornare mi vehicula sodales.</div>
<div class="doc" style="left:43.0px;top:135.0px;width:262.0px;height:8.0px;font:normal normal 5.6px/7.0px 'Liberation Sans';color:#333;white-space:nowrap;text-align:justify;text-align-last:justify;">Fusce ut imperdiet nisl. Nullam suscipit, lectus et semper ornare, ante nisi semper lorem, in viverra</div>
<div class="doc" style="left:43.0px;top:142.0px;width:262.0px;height:8.0px;font:normal normal 5.6px/7.0px 'Liberation Sans';color:#333;white-space:nowrap;text-align:justify;text-align-last:justify;">mauris augue non eros. Nam tincidunt mauris mi, nec congue est bibendum vel. Morbi ullamcorper eros</div>
<div class="doc" style="left:43.0px;top:149.0px;width:262.0px;height:8.0px;font:normal normal 5.6px/7.0px 'Liberation Sans';color:#333;white-space:nowrap;text-align:justify;text-align-last:justify;">at tempus suscipit. Nunc mattis sed lectus at eleifend. Morbi convallis augue metus, accumsan</div>
<div class="doc" style="left:43.0px;top:156.0px;width:262.0px;height:8.0px;font:normal normal 5.6px/7.0px 'Liberation Sans';color:#333;white-space:nowrap;text-align:justify;text-align-last:justify;">malesuada elit consectetur quis. Lorem ipsum dolor sit amet, consectetur adipiscing elit. Mauris vitae erat</div>
<div class="doc" style="left:43.0px;top:163.0px;width:262.0px;height:8.0px;font:normal normal 5.6px/7.0px 'Liberation Sans';color:#333;white-space:nowrap;text-align:justify;text-align-last:justify;">nibh. Morbi imperdiet scelerisque massa, non ornare turpis elementum consectetur. Praesent laoreet</div>
<div class="doc" style="left:43.0px;top:170.0px;width:164.1px;height:8.0px;font:normal normal 5.6px/7.0px 'Liberation Sans';color:#333;white-space:nowrap;">vitae libero eget pulvinar. Fusce malesuada massa at</div>
<div class="doc" style="left:43.0px;top:183.5px;width:262.0px;height:8.0px;font:normal normal 5.6px/7.0px 'Liberation Sans';color:#333;white-space:nowrap;text-align:justify;text-align-last:justify;">tincidunt tincidunt. Orci varius natoque penatibus et magnis dis parturient montes, nascetur ridiculus mus.</div>
<div class="doc" style="left:43.0px;top:190.5px;width:262.0px;height:8.0px;font:normal normal 5.6px/7.0px 'Liberation Sans';color:#333;white-space:nowrap;text-align:justify;text-align-last:justify;">Nam sed tincidunt turpis. Quisque tincidunt dictum augue sed egestas. Ut scelerisque leo sit amet lectus</div>
<div class="doc" style="left:43.0px;top:197.5px;width:262.0px;height:8.0px;font:normal normal 5.6px/7.0px 'Liberation Sans';color:#333;white-space:nowrap;text-align:justify;text-align-last:justify;">vehicula, et posuere enim porttitor. Fusce porta varius elit vel consequat. Class aptent taciti sociosqu ad</div>
<div class="doc" style="left:43.0px;top:204.5px;width:164.1px;height:8.0px;font:normal normal 5.6px/7.0px 'Liberation Sans';color:#333;white-space:nowrap;">litora torquent per conubia nostra, per inceptos</div>
<div class="doc" style="left:43.0px;top:218.0px;width:262.0px;height:8.0px;font:normal normal 5.6px/7.0px 'Liberation Sans';color:#333;white-space:nowrap;text-align:justify;text-align-last:justify;">himenaeos. Quisque in ex libero. Nullam augue mauris, blandit sit amet neque eu, viverra congue est.</div>
<div class="doc" style="left:43.0px;top:225.0px;width:262.0px;height:8.0px;font:normal normal 5.6px/7.0px 'Liberation Sans';color:#333;white-space:nowrap;text-align:justify;text-align-last:justify;">Mauris ac auctor dolor. Proin maximus quam id magna vulputate ultricies. Maecenas lacinia dolor eros,</div>
<div class="doc" style="left:43.0px;top:232.0px;width:262.0px;height:8.0px;font:normal normal 5.6px/7.0px 'Liberation Sans';color:#333;white-space:nowrap;text-align:justify;text-align-last:justify;">a bibendum tellus bibendum vitae. Praesent vel neque imperdiet, eleifend est vel, pharetra ex. Vivamus</div>
<div class="doc" style="left:43.0px;top:239.0px;width:164.1px;height:8.0px;font:normal normal 5.6px/7.0px 'Liberation Sans';color:#333;white-space:nowrap;">a hendrerit nisl. Etiam dignissim sed arcu in cursus.</div>
<div class="doc" style="left:43.0px;top:252.5px;width:262.0px;height:8.0px;font:normal normal 5.6px/7.0px 'Liberation Sans';color:#333;white-space:nowrap;text-align:justify;text-align-last:justify;">Pellentesque rutrum semper justo, ut ornare mi vehicula sodales. Fusce ut imperdiet nisl. Nullam suscipit,</div>
<div class="doc" style="left:43.0px;top:259.5px;width:262.0px;height:8.0px;font:normal normal 5.6px/7.0px 'Liberation Sans';color:#333;white-space:nowrap;text-align:justify;text-align-last:justify;">lectus et semper ornare, ante nisi semper lorem, in viverra mauris augue non eros. Nam tincidunt mauris</div>
<div class="doc" style="left:43.0px;top:266.5px;width:262.0px;height:8.0px;font:normal normal 5.6px/7.0px 'Liberation Sans';color:#333;white-space:nowrap;text-align:justify;text-align-last:justify;">mi, nec congue est bibendum vel. Morbi ullamcorper eros at tempus suscipit. Nunc mattis sed lectus at</div>
<div class="doc" style="left:43.0px;top:273.5px;width:164.1px;height:8.0px;font:normal normal 5.6px/7.0px 'Liberation Sans';color:#333;white-space:nowrap;">eleifend. Morbi convallis augue metus, accumsan</div>
<div class="doc" style="left:43.0px;top:287.0px;width:262.0px;height:8.0px;font:normal normal 5.6px/7.0px 'Liberation Sans';color:#333;white-space:nowrap;text-align:justify;text-align-last:justify;">malesuada elit consectetur quis. Lorem ipsum dolor sit amet, consectetur adipiscing elit. Mauris vitae erat</div>
<div class="doc" style="left:43.0px;top:294.0px;width:262.0px;height:8.0px;font:normal normal 5.6px/7.0px 'Liberation Sans';color:#333;white-space:nowrap;text-align:justify;text-align-last:justify;">nibh. Morbi imperdiet scelerisque massa, non ornare turpis elementum consectetur. Praesent laoreet</div>
<div class="doc" style="left:43.0px;top:301.0px;width:262.0px;height:8.0px;font:normal normal 5.6px/7.0px 'Liberation Sans';color:#333;white-space:nowrap;text-align:justify;text-align-last:justify;">vitae libero eget pulvinar. Fusce malesuada massa at tincidunt tincidunt. Orci varius natoque penatibus</div>
<div class="doc" style="left:43.0px;top:308.0px;width:164.1px;height:8.0px;font:normal normal 5.6px/7.0px 'Liberation Sans';color:#333;white-space:nowrap;">et magnis dis parturient montes, nascetur ridiculus</div>
<div class="doc" style="left:43.0px;top:321.5px;width:262.0px;height:8.0px;font:normal normal 5.6px/7.0px 'Liberation Sans';color:#333;white-space:nowrap;text-align:justify;text-align-last:justify;">mus. Nam sed tincidunt turpis. Quisque tincidunt dictum augue sed egestas. Ut scelerisque leo sit amet</div>
<div class="doc" style="left:43.0px;top:328.5px;width:262.0px;height:8.0px;font:normal normal 5.6px/7.0px 'Liberation Sans';color:#333;white-space:nowrap;text-align:justify;text-align-last:justify;">lectus vehicula, et posuere enim porttitor. Fusce porta varius elit vel consequat. Class aptent taciti</div>
<div class="doc" style="left:43.0px;top:335.5px;width:262.0px;height:8.0px;font:normal normal 5.6px/7.0px 'Liberation Sans';color:#333;white-space:nowrap;text-align:justify;text-align-last:justify;">sociosqu ad litora torquent per conubia nostra, per inceptos himenaeos. Quisque in ex libero. Nullam</div>
<div class="doc" style="left:43.0px;top:342.5px;width:262.0px;height:8.0px;font:normal normal 5.6px/7.0px 'Liberation Sans';color:#333;white-space:nowrap;text-align:justify;text-align-last:justify;">augue mauris, blandit sit amet neque eu, viverra congue est. Mauris ac auctor dolor. Proin maximus</div>
<div class="doc" style="left:43.0px;top:349.5px;width:164.1px;height:8.0px;font:normal normal 5.6px/7.0px 'Liberation Sans';color:#333;white-space:nowrap;">quam id magna vulputate ultricies. Maecenas lacinia</div></div></div>
<div class="tag" style="right:8.5px;top:6px;background:#9b44d0;color:#fff">NewOne</div>
<div class="ctitle"><b>Newest Correspondent</b>: f_combineds</div>
<div class="foot" style="height:145px;padding-top:16px">
<div class="frow"><svg width="27" height="27" viewBox="0 0 16 16"><rect x="0.8" y="1.5" width="14.4" height="13.7" rx="1.2" stroke="#6c757d" stroke-width="0.9" fill="none"/><path d="M0.8 2.7A1.2 1.2 0 0 1 2 1.5H14A1.2 1.2 0 0 1 15.2 2.7V4H0.8Z" fill="#6c757d"/><rect x="11" y="6" width="1.6" height="1.6" fill="#6c757d"/><path d="M3.5 0.5V2M12.5 0.5V2" stroke="#6c757d" stroke-width="1"/></svg><span>Feb 7, 2021</span></div>
<div class="bg3" style="bottom:16px"><div><svg width="30" height="30" viewBox="0 0 16 16"><path d="M11.5 1.5L14.5 4.5L5 14L1 15L2 11Z" stroke="#6c757d" stroke-width="0.9" fill="none" stroke-linejoin="round"/><path d="M10 3L13 6M2 11L5 14" stroke="#6c757d" stroke-width="0.9"/><path d="M1 15L1.6 12.6L3.4 14.4Z" fill="#6c757d"/></svg></div><div><svg width="32" height="32" viewBox="0 0 16 16"><path d="M0.8 8C2.5 5 5 3.2 8 3.2S13.5 5 15.2 8C13.5 11 11 12.8 8 12.8S2.5 11 0.8 8Z" stroke="#6c757d" stroke-width="0.9" fill="none"/><circle cx="8" cy="8" r="2.6" stroke="#6c757d" stroke-width="0.9" fill="none"/></svg></div><div><svg width="30" height="30" viewBox="0 0 16 16"><path d="M1 9.5V13.5A1 1 0 0 0 2 14.5H14A1 1 0 0 0 15 13.5V9.5M8 1.5V11M4.8 7.8L8 11L11.2 7.8" stroke="#6c757d" stroke-width="0.9" fill="none"/></svg></div></div>
</div>
</div>
<div class="card" style="left:2877.4px;top:1255.7px;height:655px">
<div class="thumb"><div class="tin"><div class="doc" style="left:115.6px;top:41.8px;font: bold 17px/20.4px 'Liberation Sans';color:#111;white-space:nowrap">Lorem ipsum</div>
<div class="doc" style="left:45px;top:85px;font:bold 10.6px/12.2px 'Liberation Sans';color:#222;white-space:nowrap">Lorem ipsum dolor sit amet, consectetur adipiscing</div>
<div class="doc" style="left:34px;top:97px;font:bold 10.6px/12.2px 'Liberation Sans';color:#222;white-space:nowrap">elit. Nunc ac faucibus odio.</div>
<div class="doc" style="left:34.0px;top:128.0px;width:279.0px;height:9.5px;font:normal normal 6.0px/8.5px 'Liberation Sans';color:#444;white-space:nowrap;text-align:justify;text-align-last:justify;">Mauris ac auctor dolor. Proin maximus quam id magna vulputate ultricies. Maecenas lacinia dolor eros,</div>
<div class="doc" style="left:34.0px;top:136.5px;width:279.0px;height:9.5px;font:normal normal 6.0px/8.5px 'Liberation Sans';color:#444;white-space:nowrap;text-align:justify;text-align-last:justify;">a bibendum tellus bibendum vitae. Praesent vel neque imperdiet, eleifend est vel, pharetra ex. Vivamus</div>
<div class="doc" style="left:34.0px;top:145.0px;width:279.0px;height:9.5px;font:normal normal 6.0px/8.5px 'Liberation Sans';color:#444;white-space:nowrap;text-align:justify;text-align-last:justify;">a hendrerit nisl. Etiam dignissim sed arcu in cursus. Pellentesque rutrum semper justo, ut ornare mi</div>
<div class="doc" style="left:34.0px;top:153.5px;width:279.0px;height:9.5px;font:normal normal 6.0px/8.5px 'Liberation Sans';color:#444;white-space:nowrap;text-align:justify;text-align-last:justify;">vehicula sodales. Fusce ut imperdiet nisl. Nullam suscipit, lectus et semper ornare, ante nisi semper</div>
<div class="doc" style="left:34.0px;top:162.0px;width:279.0px;height:9.5px;font:normal normal 6.0px/8.5px 'Liberation Sans';color:#444;white-space:nowrap;text-align:justify;text-align-last:justify;">lorem, in viverra mauris augue non eros. Nam tincidunt mauris mi, nec congue est bibendum vel. Morbi</div>
<div class="doc" style="left:34.0px;top:170.5px;width:279.0px;height:9.5px;font:normal normal 6.0px/8.5px 'Liberation Sans';color:#444;white-space:nowrap;text-align:justify;text-align-last:justify;">ullamcorper eros at tempus suscipit. Nunc mattis sed lectus at eleifend. Morbi convallis augue metus,</div>
<div class="doc" style="left:34.0px;top:179.0px;width:279.0px;height:9.5px;font:normal normal 6.0px/8.5px 'Liberation Sans';color:#444;white-space:nowrap;text-align:justify;text-align-last:justify;">accumsan malesuada elit consectetur quis. Lorem ipsum dolor sit amet, consectetur adipiscing elit.</div>
<div class="doc" style="left:34.0px;top:187.5px;width:279.0px;height:9.5px;font:normal normal 6.0px/8.5px 'Liberation Sans';color:#444;white-space:nowrap;text-align:justify;text-align-last:justify;">Mauris vitae erat nibh. Morbi imperdiet scelerisque massa, non ornare turpis elementum consectetur.</div>
<div class="doc" style="left:34.0px;top:196.0px;width:103.7px;height:9.5px;font:normal normal 6.0px/8.5px 'Liberation Sans';color:#444;white-space:nowrap;">Praesent laoreet vitae libero</div>
<div class="doc" style="left:34.0px;top:211.0px;width:201.3px;height:9.5px;font:normal normal 6.0px/8.5px 'Liberation Sans';color:#444;white-space:nowrap;">Maecenas mauris lectus, lobortis et purus mattis, blandit</div>
<div class="doc" style="left:44px;top:230px;width:2.5px;height:2.5px;border-radius:50%;background:#222"></div>
<div class="doc" style="left:54px;top:227px;font:bold 6.0px/8.5px 'Liberation Sans';color:#333;white-space:nowrap">Maecenas non lorem quis tellus placerat varius.</div>
<div class="doc" style="left:44px;top:246px;width:2.5px;height:2.5px;border-radius:50%;background:#222"></div>
<div class="doc" style="left:54px;top:243px;font:normal 6.0px/8.5px 'Liberation Sans';color:#333;white-space:nowrap">Nulla facilisi.</div>
<div class="doc" style="left:44px;top:262px;width:2.5px;height:2.5px;border-radius:50%;background:#222"></div>
<div class="doc" style="left:54px;top:259px;font:normal 6.0px/8.5px 'Liberation Sans';color:#333;white-space:nowrap">Aenean congue fringilla justo ut aliquam.</div>
<div class="doc" style="left:44px;top:279px;width:2.5px;height:2.5px;border-radius:50%;background:#222"></div>
<div class="doc" style="left:54px;top:276px;font:normal 6.0px/8.5px 'Liberation Sans';color:#333;white-space:nowrap">Mauris id ex erat. Nunc vulputate neque vitae justo facilisis, non condimentum ante</div>
<div class="doc" style="left:54px;top:285px;font:normal 6.0px/8.5px 'Liberation Sans';color:#333;white-space:nowrap">sagittis.</div>
<div class="doc" style="left:44px;top:303px;width:2.5px;height:2.5px;border-radius:50%;background:#222"></div>
<div class="doc" style="left:54px;top:300px;font:normal 6.0px/8.5px 'Liberation Sans';color:#333;white-space:nowrap">Morbi viverra semper lorem nec molestie.</div>
<div class="doc" style="left:44px;top:319px;width:2.5px;height:2.5px;border-radius:50%;background:#222"></div>
<div class="doc" style="left:54px;top:316px;font:normal 6.0px/8.5px 'Liberation Sans';color:#333;white-space:nowrap">Maecenas tincidunt est efficitur ligula euismod, sit amet ornare est vulputate.</div>
<div class="doc" style="left:100px;top:337px;font:5px/8px 'Liberation Sans';color:#666">12</div></div></div>
<div class="ctitle">file-sample_150kBs</div>
<div class="foot" style="height:145px;padding-top:16px">
<div class="frow"><svg width="27" height="27" viewBox="0 0 16 16"><rect x="0.8" y="1.5" width="14.4" height="13.7" rx="1.2" stroke="#6c757d" stroke-width="0.9" fill="none"/><path d="M0.8 2.7A1.2 1.2 0 0 1 2 1.5H14A1.2 1.2 0 0 1 15.2 2.7V4H0.8Z" fill="#6c757d"/><rect x="11" y="6" width="1.6" height="1.6" fill="#6c757d"/><path d="M3.5 0.5V2M12.5 0.5V2" stroke="#6c757d" stroke-width="1"/></svg><span>Feb 15, 2021</span></div>
<div class="bg3" style="bottom:16px"><div><svg width="30" height="30" viewBox="0 0 16 16"><path d="M11.5 1.5L14.5 4.5L5 14L1 15L2 11Z" stroke="#6c757d" stroke-width="0.9" fill="none" stroke-linejoin="round"/><path d="M10 3L13 6M2 11L5 14" stroke="#6c757d" stroke-width="0.9"/><path d="M1 15L1.6 12.6L3.4 14.4Z" fill="#6c757d"/></svg></div><div><svg width="32" height="32" viewBox="0 0 16 16"><path d="M0.8 8C2.5 5 5 3.2 8 3.2S13.5 5 15.2 8C13.5 11 11 12.8 8 12.8S2.5 11 0.8 8Z" stroke="#6c757d" stroke-width="0.9" fill="none"/><circle cx="8" cy="8" r="2.6" stroke="#6c757d" stroke-width="0.9" fill="none"/></svg></div><div><svg width="30" height="30" viewBox="0 0 16 16"><path d="M1 9.5V13.5A1 1 0 0 0 2 14.5H14A1 1 0 0 0 15 13.5V9.5M8 1.5V11M4.8 7.8L8 11L11.2 7.8" stroke="#6c757d" stroke-width="0.9" fill="none"/></svg></div></div>
</div>
</div>
</div>
</div>
</body></html>
